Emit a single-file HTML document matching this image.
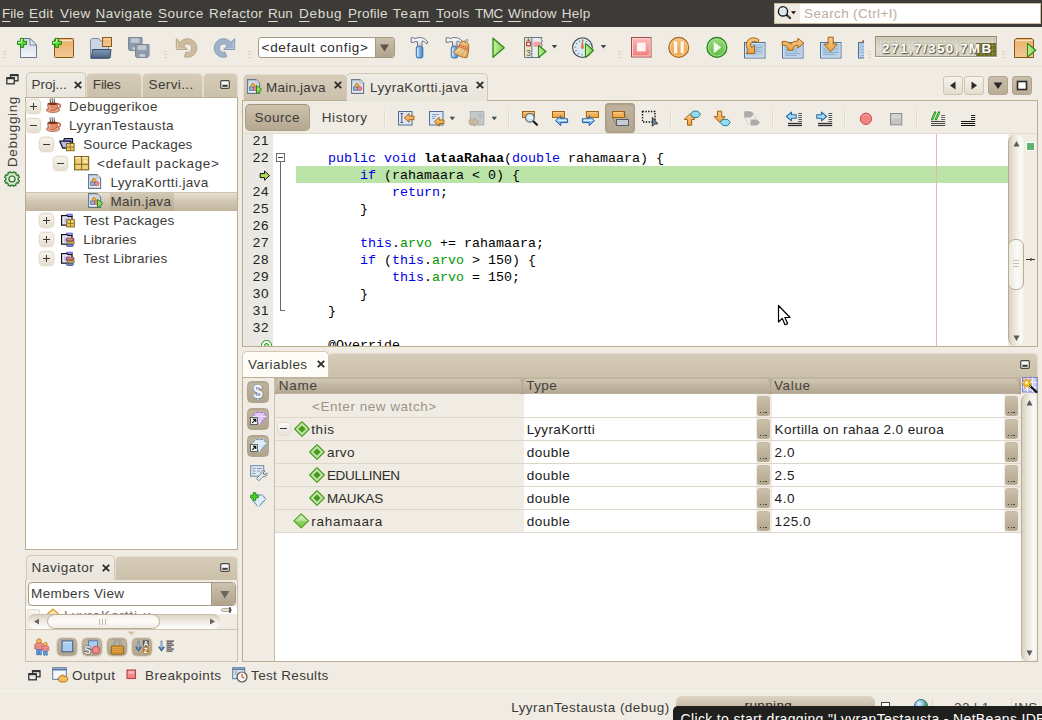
<!DOCTYPE html>
<html><head><meta charset="utf-8"><title>NetBeans</title><style>
html,body{margin:0;padding:0}
body{width:1042px;height:720px;overflow:hidden;background:#f0ece4;position:relative;font-family:"Liberation Sans",sans-serif}
.a{position:absolute;box-sizing:border-box}
.t{position:absolute;white-space:pre;line-height:20px;font-family:"Liberation Sans",sans-serif}
.m{position:absolute;white-space:pre;line-height:20px;font-family:"Liberation Mono",monospace}
u{text-decoration:underline;text-underline-offset:2.5px;text-decoration-thickness:1px}
svg{position:absolute;overflow:visible}
</style></head><body>
<div class="a" style="left:0px;top:0px;width:1042px;height:27px;background:#3c3b37;"></div>
<span class="t" style="left:2.1px;top:4px;font-size:13.5px;color:#dfdbd2;letter-spacing:0.012px;"><u>F</u>ile</span>
<span class="t" style="left:29.1px;top:4px;font-size:13.5px;color:#dfdbd2;letter-spacing:0.309px;"><u>E</u>dit</span>
<span class="t" style="left:60.1px;top:4px;font-size:13.5px;color:#dfdbd2;letter-spacing:0.371px;"><u>V</u>iew</span>
<span class="t" style="left:95.6px;top:4px;font-size:13.5px;color:#dfdbd2;letter-spacing:0.465px;"><u>N</u>avigate</span>
<span class="t" style="left:158.1px;top:4px;font-size:13.5px;color:#dfdbd2;letter-spacing:0.455px;"><u>S</u>ource</span>
<span class="t" style="left:209.1px;top:4px;font-size:13.5px;color:#dfdbd2;letter-spacing:0.385px;">Refa<u>c</u>tor</span>
<span class="t" style="left:268.1px;top:4px;font-size:13.5px;color:#dfdbd2;letter-spacing:-0.088px;"><u>R</u>un</span>
<span class="t" style="left:299.1px;top:4px;font-size:13.5px;color:#dfdbd2;letter-spacing:0.684px;"><u>D</u>ebug</span>
<span class="t" style="left:348.1px;top:4px;font-size:13.5px;color:#dfdbd2;letter-spacing:0.177px;"><u>P</u>rofile</span>
<span class="t" style="left:392.7px;top:4px;font-size:13.5px;color:#dfdbd2;letter-spacing:1.123px;">Tea<u>m</u></span>
<span class="t" style="left:436.1px;top:4px;font-size:13.5px;color:#dfdbd2;letter-spacing:0.397px;"><u>T</u>ools</span>
<span class="t" style="left:475.1px;top:4px;font-size:13.5px;color:#dfdbd2;letter-spacing:-0.580px;">TM<u>C</u></span>
<span class="t" style="left:508.1px;top:4px;font-size:13.5px;color:#dfdbd2;letter-spacing:0.081px;"><u>W</u>indow</span>
<span class="t" style="left:561.7px;top:4px;font-size:13.5px;color:#dfdbd2;letter-spacing:0.284px;"><u>H</u>elp</span>
<div class="a" style="left:774px;top:3px;width:267px;height:21px;background:#fff;border:1px solid #cbbd9f;"></div>
<div class="a" style="left:775px;top:4px;width:25px;height:19px;background:#efebe3;"></div>
<span class="t" style="left:804.1px;top:4px;font-size:13.5px;color:#bcae9c;letter-spacing:0.357px;">Search (Ctrl+I)</span>
<div class="a" style="left:0px;top:66px;width:1042px;height:1px;background:#e4ddd0;"></div>
<div class="a" style="left:0px;top:67px;width:1042px;height:1px;background:#f6f3ed;"></div>
<span class="t" style="left:-0.9px;top:-14px;font-size:13.5px;color:#3c3b37;left:0;top:0;transform-origin:0 0;transform:translate(2.5px,167px) rotate(-90deg);letter-spacing:0.62px;">Debugging</span>
<div class="a" style="left:86px;top:73px;width:56px;height:24px;background:linear-gradient(#d6ccb8,#cbc0aa);border:1px solid #e4ddce;border-bottom:none;border-radius:5px 5px 0 0;"></div>
<div class="a" style="left:142px;top:73px;width:61px;height:24px;background:linear-gradient(#d6ccb8,#cbc0aa);border:1px solid #e4ddce;border-bottom:none;border-radius:5px 5px 0 0;"></div>
<div class="a" style="left:203px;top:73px;width:35px;height:24px;background:linear-gradient(#d6ccb8,#cbc0aa);border:1px solid #e4ddce;border-bottom:none;border-radius:5px 5px 0 0;"></div>
<div class="a" style="left:26px;top:72px;width:60px;height:26px;background:linear-gradient(#efece5,#e9e5dc);border:1px solid #d2c8b5;border-bottom:none;border-radius:5px 5px 0 0;"></div>
<span class="t" style="left:31.6px;top:75px;font-size:13.5px;color:#3c3b37;letter-spacing:-0.037px;">Proj...</span>
<span class="t" style="left:92.8px;top:75px;font-size:13.5px;color:#3c3b37;letter-spacing:-0.140px;">Files</span>
<span class="t" style="left:148.6px;top:75px;font-size:13.5px;color:#3c3b37;letter-spacing:0.374px;">Servi...</span>
<div class="a" style="left:25px;top:97px;width:213px;height:453px;background:#fff;border:1px solid #bbae93;"></div>
<div class="a" style="left:26px;top:192px;width:211px;height:19px;background:linear-gradient(#e6dfd1,#d2c8b4 45%,#c1b59e);border-top:1px solid #cdc3af;"></div>
<div class="a" style="left:110px;top:193px;width:64px;height:18px;background:linear-gradient(#d3c9b5,#c4b8a2 50%,#b9ac94);"></div>
<span class="t" style="left:69.1px;top:97px;font-size:13.5px;color:#3c3b37;letter-spacing:0.387px;">Debuggerikoe</span>
<span class="t" style="left:69.1px;top:116px;font-size:13.5px;color:#3c3b37;letter-spacing:0.480px;">LyyranTestausta</span>
<span class="t" style="left:83.3px;top:135px;font-size:13.5px;color:#3c3b37;letter-spacing:0.233px;">Source Packages</span>
<span class="t" style="left:97.1px;top:154px;font-size:13.5px;color:#3c3b37;letter-spacing:0.671px;">&lt;default package&gt;</span>
<span class="t" style="left:110.4px;top:173px;font-size:13.5px;color:#3c3b37;letter-spacing:0.354px;">LyyraKortti.java</span>
<span class="t" style="left:110.4px;top:192px;font-size:13.5px;color:#3c3b37;letter-spacing:0.347px;">Main.java</span>
<span class="t" style="left:83.3px;top:211px;font-size:13.5px;color:#3c3b37;letter-spacing:0.270px;">Test Packages</span>
<span class="t" style="left:83.3px;top:230px;font-size:13.5px;color:#3c3b37;letter-spacing:0.170px;">Libraries</span>
<span class="t" style="left:83.3px;top:249px;font-size:13.5px;color:#3c3b37;letter-spacing:0.287px;">Test Libraries</span>
<div class="a" style="left:115px;top:556px;width:123px;height:24px;background:linear-gradient(#d6ccb8,#cbc0aa);border:1px solid #e4ddce;border-bottom:none;border-radius:5px 5px 0 0;"></div>
<div class="a" style="left:26px;top:555px;width:89px;height:26px;background:linear-gradient(#efece5,#e9e5dc);border:1px solid #d2c8b5;border-bottom:none;border-radius:5px 5px 0 0;"></div>
<span class="t" style="left:31.6px;top:558px;font-size:13.5px;color:#3c3b37;letter-spacing:0.547px;">Navigator</span>
<div class="a" style="left:25px;top:580px;width:213px;height:82px;background:#f0ece4;border:1px solid #cbc1ad;border-top:none;"></div>
<div class="a" style="left:27.5px;top:581.5px;width:208.5px;height:24.5px;background:#fff;border:1px solid #a89b85;border-radius:4px;"></div>
<div class="a" style="left:210.5px;top:582.5px;width:24.5px;height:22.5px;background:linear-gradient(#cdc2ad,#b1a48d);border-left:1px solid #a89b85;border-radius:0 3px 3px 0;"></div>
<span class="t" style="left:31.1px;top:584px;font-size:13.5px;color:#3c3b37;letter-spacing:0.356px;">Members View</span>
<div class="a" style="left:243px;top:74px;width:104px;height:26px;background:linear-gradient(#d6ccb8,#cbc0aa);border:1px solid #e4ddce;border-bottom:none;border-radius:5px 5px 0 0;"></div>
<div class="a" style="left:346px;top:73px;width:142px;height:28px;background:linear-gradient(#efece5,#e9e5dc);border:1px solid #d2c8b5;border-bottom:none;border-radius:5px 5px 0 0;"></div>
<span class="t" style="left:266.1px;top:78px;font-size:13.5px;color:#3c3b37;letter-spacing:0.192px;">Main.java</span>
<span class="t" style="left:370.1px;top:78px;font-size:13.5px;color:#3c3b37;letter-spacing:0.342px;">LyyraKortti.java</span>
<div class="a" style="left:242px;top:100px;width:796px;height:247px;background:#f0ece4;border:1px solid #bbae93;"></div>
<div class="a" style="left:347px;top:100px;width:140px;height:1px;background:#e9e5dc;"></div>
<div class="a" style="left:245px;top:104px;width:65px;height:27px;background:linear-gradient(#cdc1ac,#b5a891);border:1px solid #ab9f88;border-top-color:#9f937b;border-radius:5px;"></div>
<span class="t" style="left:254.6px;top:108px;font-size:13.5px;color:#3c3b37;letter-spacing:0.438px;">Source</span>
<span class="t" style="left:321.8px;top:108px;font-size:13.5px;color:#3c3b37;letter-spacing:0.543px;">History</span>
<div class="a" style="left:244px;top:134px;width:764px;height:212px;background:#fff;"></div>
<div class="a" style="left:244px;top:133px;width:793px;height:1px;background:#e3dccf;"></div>
<div class="a" style="left:243px;top:134px;width:30px;height:212px;background:#e9e8e3;"></div>
<div class="a" style="left:296px;top:166px;width:712px;height:17px;background:#bbe4a9;"></div>
<div class="a" style="left:936px;top:134px;width:1px;height:212px;background:#f5b0b0;"></div>
<span class="t" style="left:252.7px;top:131px;font-size:13.5px;color:#222;letter-spacing:0.743px;">21</span>
<span class="t" style="left:252.7px;top:148px;font-size:13.5px;color:#222;letter-spacing:0.743px;">22</span>
<span class="t" style="left:252.7px;top:182px;font-size:13.5px;color:#222;letter-spacing:0.743px;">24</span>
<span class="t" style="left:252.7px;top:199px;font-size:13.5px;color:#222;letter-spacing:0.743px;">25</span>
<span class="t" style="left:252.7px;top:216px;font-size:13.5px;color:#222;letter-spacing:0.743px;">26</span>
<span class="t" style="left:252.7px;top:233px;font-size:13.5px;color:#222;letter-spacing:0.743px;">27</span>
<span class="t" style="left:252.7px;top:250px;font-size:13.5px;color:#222;letter-spacing:0.743px;">28</span>
<span class="t" style="left:252.7px;top:267px;font-size:13.5px;color:#222;letter-spacing:0.743px;">29</span>
<span class="t" style="left:252.7px;top:284px;font-size:13.5px;color:#222;letter-spacing:0.743px;">30</span>
<span class="t" style="left:252.7px;top:301px;font-size:13.5px;color:#222;letter-spacing:0.743px;">31</span>
<span class="t" style="left:252.7px;top:318px;font-size:13.5px;color:#222;letter-spacing:0.743px;">32</span>
<span class="m" style="left:328.0px;top:149px;font-size:13.333px;color:#0000e6;">public</span>
<span class="m" style="left:384.0px;top:149px;font-size:13.333px;color:#0000e6;">void</span>
<span class="m" style="left:424.0px;top:149px;font-size:13.333px;color:#000;font-weight:bold;">lataaRahaa</span>
<span class="m" style="left:504.0px;top:149px;font-size:13.333px;color:#000;">(</span>
<span class="m" style="left:512.0px;top:149px;font-size:13.333px;color:#0000e6;">double</span>
<span class="m" style="left:560.0px;top:149px;font-size:13.333px;color:#000;"> rahamaara) {</span>
<span class="m" style="left:360.0px;top:166px;font-size:13.333px;color:#0000e6;">if</span>
<span class="m" style="left:376.0px;top:166px;font-size:13.333px;color:#000;"> (rahamaara &lt; 0) {</span>
<span class="m" style="left:392.0px;top:183px;font-size:13.333px;color:#0000e6;">return</span>
<span class="m" style="left:440.0px;top:183px;font-size:13.333px;color:#000;">;</span>
<span class="m" style="left:296.0px;top:200px;font-size:13.333px;color:#000;">        }</span>
<span class="m" style="left:360.0px;top:234px;font-size:13.333px;color:#0000e6;">this</span>
<span class="m" style="left:392.0px;top:234px;font-size:13.333px;color:#000;">.</span>
<span class="m" style="left:400.0px;top:234px;font-size:13.333px;color:#009900;">arvo</span>
<span class="m" style="left:432.0px;top:234px;font-size:13.333px;color:#000;"> += rahamaara;</span>
<span class="m" style="left:360.0px;top:251px;font-size:13.333px;color:#0000e6;">if</span>
<span class="m" style="left:376.0px;top:251px;font-size:13.333px;color:#000;"> (</span>
<span class="m" style="left:392.0px;top:251px;font-size:13.333px;color:#0000e6;">this</span>
<span class="m" style="left:424.0px;top:251px;font-size:13.333px;color:#000;">.</span>
<span class="m" style="left:432.0px;top:251px;font-size:13.333px;color:#009900;">arvo</span>
<span class="m" style="left:464.0px;top:251px;font-size:13.333px;color:#000;"> &gt; 150) {</span>
<span class="m" style="left:392.0px;top:268px;font-size:13.333px;color:#0000e6;">this</span>
<span class="m" style="left:424.0px;top:268px;font-size:13.333px;color:#000;">.</span>
<span class="m" style="left:432.0px;top:268px;font-size:13.333px;color:#009900;">arvo</span>
<span class="m" style="left:464.0px;top:268px;font-size:13.333px;color:#000;"> = 150;</span>
<span class="m" style="left:296.0px;top:285px;font-size:13.333px;color:#000;">        }</span>
<span class="m" style="left:296.0px;top:302px;font-size:13.333px;color:#000;">    }</span>
<div class="a" style="left:296px;top:336px;width:200px;height:10px;overflow:hidden"><span class="m" style="left:32px;top:0px;font-size:13.333px;color:#000">@Override</span></div>
<div class="a" style="left:328px;top:353px;width:710px;height:24px;background:linear-gradient(#d6ccb8,#cbc0aa);border:1px solid #e4ddce;border-bottom:none;border-radius:5px 5px 0 0;"></div>
<div class="a" style="left:242px;top:351px;width:87px;height:27px;background:#fdfcf6;border:1px solid #d2c8b5;border-bottom:none;border-radius:5px 5px 0 0;"></div>
<span class="t" style="left:248.1px;top:355px;font-size:13.5px;color:#3c3b37;letter-spacing:0.469px;">Variables</span>
<div class="a" style="left:242px;top:377px;width:796px;height:285px;background:#f0ece4;border:1px solid #bbae93;"></div>
<div class="a" style="left:274px;top:378px;width:1px;height:283px;background:#c9bfab;"></div>
<div class="a" style="left:275px;top:378px;width:746px;height:283px;background:#fff;"></div>
<div class="a" style="left:275px;top:377px;width:746px;height:17px;background:linear-gradient(#c2b7a2,#b3a790 30%,#ada18a);"></div>
<div class="a" style="left:276px;top:379px;width:245px;height:14px;background:linear-gradient(#d1c7b3,#c2b7a2 45%,#b4a892);border-radius:3.500px;box-shadow:0 0 0 1px #c0b5a0;"></div>
<div class="a" style="left:524px;top:379px;width:245px;height:14px;background:linear-gradient(#d1c7b3,#c2b7a2 45%,#b4a892);border-radius:3.500px;box-shadow:0 0 0 1px #c0b5a0;"></div>
<div class="a" style="left:772px;top:379px;width:246px;height:14px;background:linear-gradient(#d1c7b3,#c2b7a2 45%,#b4a892);border-radius:3.500px;box-shadow:0 0 0 1px #c0b5a0;"></div>
<span class="t" style="left:278.8px;top:376px;font-size:13.5px;color:#46423b;letter-spacing:0.773px;">Name</span>
<span class="t" style="left:526.3px;top:376px;font-size:13.5px;color:#46423b;letter-spacing:0.359px;">Type</span>
<span class="t" style="left:773.9px;top:376px;font-size:13.5px;color:#46423b;letter-spacing:0.675px;">Value</span>
<div class="a" style="left:275px;top:394px;width:249px;height:139px;background:#f0ece4;"></div>
<div class="a" style="left:756px;top:394px;width:16px;height:139px;background:#f0ece4;"></div>
<div class="a" style="left:1004px;top:394px;width:17px;height:139px;background:#f0ece4;"></div>
<div class="a" style="left:275px;top:417px;width:746px;height:1px;background:#ddd6c9;"></div>
<div class="a" style="left:757px;top:396px;width:13px;height:20px;background:linear-gradient(#cdc2ad,#b2a58e);border-radius:3.5px;box-shadow:inset 0 0 0 .5px #bfb39d;"></div>
<div class="a" style="left:760.2px;top:411.8px;width:1.3px;height:1.3px;background:#4a453c;"></div>
<div class="a" style="left:762.8000000000001px;top:411.8px;width:1.3px;height:1.3px;background:#4a453c;"></div>
<div class="a" style="left:765.4000000000001px;top:411.8px;width:1.3px;height:1.3px;background:#4a453c;"></div>
<div class="a" style="left:1005px;top:396px;width:13px;height:20px;background:linear-gradient(#cdc2ad,#b2a58e);border-radius:3.5px;box-shadow:inset 0 0 0 .5px #bfb39d;"></div>
<div class="a" style="left:1008.2px;top:411.8px;width:1.3px;height:1.3px;background:#4a453c;"></div>
<div class="a" style="left:1010.8000000000001px;top:411.8px;width:1.3px;height:1.3px;background:#4a453c;"></div>
<div class="a" style="left:1013.4000000000001px;top:411.8px;width:1.3px;height:1.3px;background:#4a453c;"></div>
<div class="a" style="left:275px;top:440px;width:746px;height:1px;background:#ddd6c9;"></div>
<div class="a" style="left:757px;top:419px;width:13px;height:20px;background:linear-gradient(#cdc2ad,#b2a58e);border-radius:3.5px;box-shadow:inset 0 0 0 .5px #bfb39d;"></div>
<div class="a" style="left:760.2px;top:434.8px;width:1.3px;height:1.3px;background:#4a453c;"></div>
<div class="a" style="left:762.8000000000001px;top:434.8px;width:1.3px;height:1.3px;background:#4a453c;"></div>
<div class="a" style="left:765.4000000000001px;top:434.8px;width:1.3px;height:1.3px;background:#4a453c;"></div>
<div class="a" style="left:1005px;top:419px;width:13px;height:20px;background:linear-gradient(#cdc2ad,#b2a58e);border-radius:3.5px;box-shadow:inset 0 0 0 .5px #bfb39d;"></div>
<div class="a" style="left:1008.2px;top:434.8px;width:1.3px;height:1.3px;background:#4a453c;"></div>
<div class="a" style="left:1010.8000000000001px;top:434.8px;width:1.3px;height:1.3px;background:#4a453c;"></div>
<div class="a" style="left:1013.4000000000001px;top:434.8px;width:1.3px;height:1.3px;background:#4a453c;"></div>
<div class="a" style="left:275px;top:463px;width:746px;height:1px;background:#ddd6c9;"></div>
<div class="a" style="left:757px;top:442px;width:13px;height:20px;background:linear-gradient(#cdc2ad,#b2a58e);border-radius:3.5px;box-shadow:inset 0 0 0 .5px #bfb39d;"></div>
<div class="a" style="left:760.2px;top:457.8px;width:1.3px;height:1.3px;background:#4a453c;"></div>
<div class="a" style="left:762.8000000000001px;top:457.8px;width:1.3px;height:1.3px;background:#4a453c;"></div>
<div class="a" style="left:765.4000000000001px;top:457.8px;width:1.3px;height:1.3px;background:#4a453c;"></div>
<div class="a" style="left:1005px;top:442px;width:13px;height:20px;background:linear-gradient(#cdc2ad,#b2a58e);border-radius:3.5px;box-shadow:inset 0 0 0 .5px #bfb39d;"></div>
<div class="a" style="left:1008.2px;top:457.8px;width:1.3px;height:1.3px;background:#4a453c;"></div>
<div class="a" style="left:1010.8000000000001px;top:457.8px;width:1.3px;height:1.3px;background:#4a453c;"></div>
<div class="a" style="left:1013.4000000000001px;top:457.8px;width:1.3px;height:1.3px;background:#4a453c;"></div>
<div class="a" style="left:275px;top:486px;width:746px;height:1px;background:#ddd6c9;"></div>
<div class="a" style="left:757px;top:465px;width:13px;height:20px;background:linear-gradient(#cdc2ad,#b2a58e);border-radius:3.5px;box-shadow:inset 0 0 0 .5px #bfb39d;"></div>
<div class="a" style="left:760.2px;top:480.8px;width:1.3px;height:1.3px;background:#4a453c;"></div>
<div class="a" style="left:762.8000000000001px;top:480.8px;width:1.3px;height:1.3px;background:#4a453c;"></div>
<div class="a" style="left:765.4000000000001px;top:480.8px;width:1.3px;height:1.3px;background:#4a453c;"></div>
<div class="a" style="left:1005px;top:465px;width:13px;height:20px;background:linear-gradient(#cdc2ad,#b2a58e);border-radius:3.5px;box-shadow:inset 0 0 0 .5px #bfb39d;"></div>
<div class="a" style="left:1008.2px;top:480.8px;width:1.3px;height:1.3px;background:#4a453c;"></div>
<div class="a" style="left:1010.8000000000001px;top:480.8px;width:1.3px;height:1.3px;background:#4a453c;"></div>
<div class="a" style="left:1013.4000000000001px;top:480.8px;width:1.3px;height:1.3px;background:#4a453c;"></div>
<div class="a" style="left:275px;top:509px;width:746px;height:1px;background:#ddd6c9;"></div>
<div class="a" style="left:757px;top:488px;width:13px;height:20px;background:linear-gradient(#cdc2ad,#b2a58e);border-radius:3.5px;box-shadow:inset 0 0 0 .5px #bfb39d;"></div>
<div class="a" style="left:760.2px;top:503.8px;width:1.3px;height:1.3px;background:#4a453c;"></div>
<div class="a" style="left:762.8000000000001px;top:503.8px;width:1.3px;height:1.3px;background:#4a453c;"></div>
<div class="a" style="left:765.4000000000001px;top:503.8px;width:1.3px;height:1.3px;background:#4a453c;"></div>
<div class="a" style="left:1005px;top:488px;width:13px;height:20px;background:linear-gradient(#cdc2ad,#b2a58e);border-radius:3.5px;box-shadow:inset 0 0 0 .5px #bfb39d;"></div>
<div class="a" style="left:1008.2px;top:503.8px;width:1.3px;height:1.3px;background:#4a453c;"></div>
<div class="a" style="left:1010.8000000000001px;top:503.8px;width:1.3px;height:1.3px;background:#4a453c;"></div>
<div class="a" style="left:1013.4000000000001px;top:503.8px;width:1.3px;height:1.3px;background:#4a453c;"></div>
<div class="a" style="left:275px;top:532px;width:746px;height:1px;background:#ddd6c9;"></div>
<div class="a" style="left:757px;top:511px;width:13px;height:20px;background:linear-gradient(#cdc2ad,#b2a58e);border-radius:3.5px;box-shadow:inset 0 0 0 .5px #bfb39d;"></div>
<div class="a" style="left:760.2px;top:526.8px;width:1.3px;height:1.3px;background:#4a453c;"></div>
<div class="a" style="left:762.8000000000001px;top:526.8px;width:1.3px;height:1.3px;background:#4a453c;"></div>
<div class="a" style="left:765.4000000000001px;top:526.8px;width:1.3px;height:1.3px;background:#4a453c;"></div>
<div class="a" style="left:1005px;top:511px;width:13px;height:20px;background:linear-gradient(#cdc2ad,#b2a58e);border-radius:3.5px;box-shadow:inset 0 0 0 .5px #bfb39d;"></div>
<div class="a" style="left:1008.2px;top:526.8px;width:1.3px;height:1.3px;background:#4a453c;"></div>
<div class="a" style="left:1010.8000000000001px;top:526.8px;width:1.3px;height:1.3px;background:#4a453c;"></div>
<div class="a" style="left:1013.4000000000001px;top:526.8px;width:1.3px;height:1.3px;background:#4a453c;"></div>
<span class="t" style="left:312.1px;top:397px;font-size:13.5px;color:#9a948a;letter-spacing:0.526px;">&lt;Enter new watch&gt;</span>
<span class="t" style="left:311.2px;top:420px;font-size:13.5px;color:#2e2c29;letter-spacing:0.598px;">this</span>
<span class="t" style="left:526.8px;top:420px;font-size:13.5px;color:#1c1b1a;letter-spacing:0.389px;">LyyraKortti</span>
<span class="t" style="left:774.6px;top:420px;font-size:13.5px;color:#1c1b1a;letter-spacing:0.385px;">Kortilla on rahaa 2.0 euroa</span>
<span class="t" style="left:326.9px;top:443px;font-size:13.5px;color:#2e2c29;letter-spacing:0.485px;">arvo</span>
<span class="t" style="left:526.8px;top:443px;font-size:13.5px;color:#1c1b1a;letter-spacing:0.461px;">double</span>
<span class="t" style="left:774.6px;top:443px;font-size:13.5px;color:#1c1b1a;letter-spacing:0.578px;">2.0</span>
<span class="t" style="left:326.9px;top:466px;font-size:13.5px;color:#2e2c29;letter-spacing:-0.319px;">EDULLINEN</span>
<span class="t" style="left:526.8px;top:466px;font-size:13.5px;color:#1c1b1a;letter-spacing:0.461px;">double</span>
<span class="t" style="left:774.6px;top:466px;font-size:13.5px;color:#1c1b1a;letter-spacing:0.578px;">2.5</span>
<span class="t" style="left:326.9px;top:489px;font-size:13.5px;color:#2e2c29;letter-spacing:-0.136px;">MAUKAS</span>
<span class="t" style="left:526.8px;top:489px;font-size:13.5px;color:#1c1b1a;letter-spacing:0.461px;">double</span>
<span class="t" style="left:774.6px;top:489px;font-size:13.5px;color:#1c1b1a;letter-spacing:0.578px;">4.0</span>
<span class="t" style="left:311.2px;top:512px;font-size:13.5px;color:#2e2c29;letter-spacing:0.736px;">rahamaara</span>
<span class="t" style="left:526.8px;top:512px;font-size:13.5px;color:#1c1b1a;letter-spacing:0.461px;">double</span>
<span class="t" style="left:774.6px;top:512px;font-size:13.5px;color:#1c1b1a;letter-spacing:0.544px;">125.0</span>
<span class="t" style="left:71.9px;top:666px;font-size:13.5px;color:#3c3b37;letter-spacing:0.529px;">Output</span>
<span class="t" style="left:145.1px;top:666px;font-size:13.5px;color:#3c3b37;letter-spacing:0.474px;">Breakpoints</span>
<span class="t" style="left:251.1px;top:666px;font-size:13.5px;color:#3c3b37;letter-spacing:0.331px;">Test Results</span>
<div class="a" style="left:0px;top:689px;width:1042px;height:1px;background:#ebe6dc;"></div>
<div class="a" style="left:0px;top:690px;width:1042px;height:1px;background:#f5f2ec;"></div>
<span class="t" style="left:511.2px;top:698px;font-size:13.5px;color:#3c3b37;letter-spacing:0.449px;">LyyranTestausta (debug)</span>
<div class="a" style="left:675.5px;top:696px;width:199px;height:24px;background:linear-gradient(#ddd5c4,#c6bba6 45%,#b5a992);border-radius:6px 6px 0 0;"></div>
<span class="t" style="left:744.5px;top:696px;font-size:13.5px;color:#2b2a27;letter-spacing:0.382px;">running...</span>
<div class="a" style="left:881px;top:702px;width:9px;height:6px;border:1px solid #444;border-bottom:none;background:#fff;"></div>
<div class="a" style="left:913px;top:698px;width:15px;height:8px;overflow:hidden"><div class="a" style="left:.500px;top:.500px;width:14px;height:14px;border-radius:50%;background:radial-gradient(circle at 35% 30%,#e8f4fc,#8ec8f0 30%,#4aa040 60%,#2a6a2a);border:1px solid #3a6a8a"></div></div>
<span class="t" style="left:954.1px;top:698px;font-size:13.5px;color:#4a4843;letter-spacing:0.328px;">23 | 1</span>
<span class="t" style="left:1014.1px;top:698px;font-size:13.5px;color:#4a4843;letter-spacing:0.332px;">INS</span>
<div class="a" style="left:932px;top:698px;width:1px;height:10px;background:#e0d9cb;"></div>
<div class="a" style="left:1011px;top:698px;width:1px;height:10px;background:#e0d9cb;"></div>
<div class="a" style="left:673px;top:706px;width:380px;height:20px;background:#1f1f1d;border-radius:5px 0 0 0;"></div>
<span class="t" style="left:680.6px;top:709px;font-size:14px;color:#fff;letter-spacing:.334px;">Click to start dragging "LyyranTestausta - NetBeans IDE 7</span>
<svg width="0" height="0" style="left:0;top:0"><defs>
<linearGradient id="gPage" x1="0" y1="0" x2="0" y2="1"><stop offset="0" stop-color="#ccd7e6"/><stop offset="1" stop-color="#f4f6f9"/></linearGradient>
<linearGradient id="gOr" x1="0" y1="0" x2="0" y2="1"><stop offset="0" stop-color="#e9b06a"/><stop offset="1" stop-color="#f3c995"/></linearGradient>
<linearGradient id="gFold" x1="0" y1="0" x2="0" y2="1"><stop offset="0" stop-color="#7f97b2"/><stop offset="1" stop-color="#4d6784"/></linearGradient>
<linearGradient id="gGreen" x1="0" y1="0" x2="1" y2="0"><stop offset="0" stop-color="#c8eda4"/><stop offset="1" stop-color="#7fce4e"/></linearGradient>
<linearGradient id="gStop" x1="0" y1="0" x2="0" y2="1"><stop offset="0" stop-color="#f9bdb9"/><stop offset="1" stop-color="#f27a76"/></linearGradient>
<linearGradient id="gPause" x1="0" y1="0" x2="0" y2="1"><stop offset="0" stop-color="#f3c07c"/><stop offset="1" stop-color="#eba24a"/></linearGradient>
<linearGradient id="gCont" x1="0" y1="0" x2="0" y2="1"><stop offset="0" stop-color="#9bd97d"/><stop offset="1" stop-color="#5fbd45"/></linearGradient>
<linearGradient id="gHandle" x1="0" y1="0" x2="0" y2="1"><stop offset="0" stop-color="#8fc0ea"/><stop offset="1" stop-color="#3f86cf"/></linearGradient>
<linearGradient id="gBlue" x1="0" y1="0" x2="0" y2="1"><stop offset="0" stop-color="#a9c6e2"/><stop offset="1" stop-color="#bcd3e8"/></linearGradient>
<linearGradient id="gArr" x1="0" y1="0" x2="0" y2="1"><stop offset="0" stop-color="#f7cc8a"/><stop offset="1" stop-color="#eea03c"/></linearGradient>
<linearGradient id="gMem" x1="0" y1="0" x2="0" y2="1"><stop offset="0" stop-color="#c9c6b3"/><stop offset="0.5" stop-color="#dedbcf"/><stop offset="1" stop-color="#d4d1c2"/></linearGradient>
<linearGradient id="gBtn" x1="0" y1="0" x2="0" y2="1"><stop offset="0" stop-color="#f6f3ec"/><stop offset="1" stop-color="#ddd5c5"/></linearGradient>
</defs></svg>
<div class="a" style="left:3px;top:51px;width:3px;height:1px;background:#ddd3bd;"></div>
<div class="a" style="left:3px;top:54px;width:3px;height:1px;background:#ddd3bd;"></div>
<div class="a" style="left:3px;top:57px;width:3px;height:1px;background:#ddd3bd;"></div>
<div class="a" style="left:164px;top:51px;width:3px;height:1px;background:#ddd3bd;"></div>
<div class="a" style="left:164px;top:54px;width:3px;height:1px;background:#ddd3bd;"></div>
<div class="a" style="left:164px;top:57px;width:3px;height:1px;background:#ddd3bd;"></div>
<div class="a" style="left:248px;top:51px;width:3px;height:1px;background:#ddd3bd;"></div>
<div class="a" style="left:248px;top:54px;width:3px;height:1px;background:#ddd3bd;"></div>
<div class="a" style="left:248px;top:57px;width:3px;height:1px;background:#ddd3bd;"></div>
<div class="a" style="left:618px;top:51px;width:3px;height:1px;background:#ddd3bd;"></div>
<div class="a" style="left:618px;top:54px;width:3px;height:1px;background:#ddd3bd;"></div>
<div class="a" style="left:618px;top:57px;width:3px;height:1px;background:#ddd3bd;"></div>
<div class="a" style="left:868px;top:51px;width:3px;height:1px;background:#ddd3bd;"></div>
<div class="a" style="left:868px;top:54px;width:3px;height:1px;background:#ddd3bd;"></div>
<div class="a" style="left:868px;top:57px;width:3px;height:1px;background:#ddd3bd;"></div>
<div class="a" style="left:1002px;top:51px;width:3px;height:1px;background:#ddd3bd;"></div>
<div class="a" style="left:1002px;top:54px;width:3px;height:1px;background:#ddd3bd;"></div>
<div class="a" style="left:1002px;top:57px;width:3px;height:1px;background:#ddd3bd;"></div>
<svg style="left:16px;top:36px" width="24" height="24" viewBox="0 0 24 24"><path d="M4.5 2.5h9.5l6.5 6.5v12.5h-16z" fill="url(#gPage)" stroke="#68778b" stroke-width="1"/><path d="M14 2.5v6.5h6.5z" fill="#dfe6ef" stroke="#68778b" stroke-width="0.8"/><path d="M1.5 5.3h2.900v-2.900h3.200v2.900h2.900v3.200h-2.900v2.900h-3.200v-2.900h-2.900z" fill="#5bd636" stroke="#1d8a0d" stroke-width="1"/><path d="M5.4 6.3v-2.900h1.200M5.4 6.3h-2.900v1.200" fill="none" stroke="#d6f8c0" stroke-width="1"/></svg>
<svg style="left:52px;top:36px" width="24" height="24" viewBox="0 0 24 24"><rect x="2.5" y="2.5" width="19" height="19" rx="1" fill="url(#gOr)" stroke="#8a5718" stroke-width="1"/><path d="M3.5 4.5h17" stroke="#fae2bd" stroke-width="1.4"/><path d="M0.5 5.3h2.900v-2.900h3.200v2.900h2.900v3.200h-2.900v2.900h-3.200v-2.900h-2.900z" fill="#5bd636" stroke="#1d8a0d" stroke-width="1"/><path d="M4.4 6.3v-2.900h1.200M4.4 6.3h-2.900v1.200" fill="none" stroke="#d6f8c0" stroke-width="1"/></svg>
<svg style="left:88px;top:35px" width="26" height="25" viewBox="0 0 26 25"><path d="M2.5 23.5v-18.5l1.5-1.5h7l1.5 2.5h8v17.5z" fill="#ccd6e2" stroke="#7c8da3" stroke-width="1"/><rect x="14.5" y="2.5" width="9" height="9" fill="url(#gOr)" stroke="#8a5718"/><path d="M15.5 4h7" stroke="#fae2bd" stroke-width="1.2"/><path d="M4.5 14.5h18.5l-1 8.5h-18.5z" fill="url(#gFold)" stroke="#354a63" stroke-width="1"/></svg>
<svg style="left:127px;top:36px" width="25" height="24" viewBox="0 0 25 24"><path d="M1.5 1.5h13.5v11.5l-1.5 1.5h-11l-1-1z" fill="#8e9bab" stroke="#7a8899" stroke-width="1"/><rect x="3.8" y="2.3" width="8.5" height="4.6" fill="#c3cad3"/><rect x="5.5" y="11.2" width="5.5" height="2.6" fill="#c9cfd7"/><path d="M8.5 8.5h13.5v11.5l-1.5 1.5h-11l-1-1z" fill="#8e9bab" stroke="#7a8899" stroke-width="1"/><rect x="10.8" y="9.3" width="8.5" height="4.6" fill="#c3cad3"/><rect x="12.5" y="18.2" width="5.5" height="2.6" fill="#c9cfd7"/></svg>
<svg style="left:175px;top:37px" width="24" height="22" viewBox="0 0 24 22"><path d="M1.3 1.5 L1.3 12.5 L12.3 12.5 L8.81 9.0 A4.2 4.2 0 1 1 11.06 14.95 L9.32 19.74 A9.3 9.3 0 1 0 5.13 5.33 Z" fill="#cdbb9f" stroke="#bda98a" stroke-width="1" stroke-linejoin="round"/><path d="M2.500 4.500v7h7" fill="none" stroke="#dccfb8" stroke-width=".8"/></svg>
<svg style="left:211.5px;top:37px" width="24" height="22" viewBox="0 0 24 22"><path d="M22.7 1.5 L22.7 12.5 L11.7 12.5 L15.19 9.0 A4.2 4.2 0 1 0 12.94 14.95 L14.68 19.74 A9.3 9.3 0 1 1 18.87 5.33 Z" fill="#9db3c9" stroke="#879fb8" stroke-width="1" stroke-linejoin="round"/><path d="M21.500 4.500v7h-7" fill="none" stroke="#bccde0" stroke-width=".8"/></svg>
<div class="a" style="left:258px;top:37px;width:137px;height:21px;background:#fff;border:1px solid #a79a83;border-radius:3px;"></div>
<div class="a" style="left:375px;top:38px;width:19px;height:19px;background:linear-gradient(#cbc0aa,#b1a48d);border-left:1px solid #a79a83;border-radius:0 2px 2px 0;"></div>
<svg style="left:375px;top:38px" width="19" height="19" viewBox="0 0 19 19"><path d="M5 6.5h9l-4.5 7z" fill="#5b544a"/></svg>
<span class="t" style="left:261.6px;top:38px;font-size:13.5px;color:#2e2d2a;letter-spacing:0.683px;">&lt;default config&gt;</span>
<svg width="0" height="0" style="left:0;top:0"><defs><linearGradient id="gHd" x1="0" y1="0" x2="0" y2="1"><stop offset="0" stop-color="#ffffff"/><stop offset="1" stop-color="#cfd5dd"/></linearGradient><linearGradient id="gHn" x1="0" y1="0" x2="1" y2="0"><stop offset="0" stop-color="#b5d8f4"/><stop offset=".45" stop-color="#7db6ea"/><stop offset="1" stop-color="#3f86d0"/></linearGradient><linearGradient id="gBr" x1="0" y1="0" x2="1" y2="1"><stop offset="0" stop-color="#f0cf98"/><stop offset="1" stop-color="#d9a258"/></linearGradient></defs></svg>
<svg style="left:410px;top:36px" width="20" height="24" viewBox="0 0 20 24"><rect x="6.300" y="10.400" width="6.500" height="11.500" rx="1.600" fill="url(#gHn)" stroke="#2f6aa8" stroke-width="1"/><path d="M7.800 12v8" stroke="#dceefb" stroke-width="1.100"/><path d="M1.200 1.800 L3.800 1.800 L5 2.600 C8 1.200 12 1.200 14.500 2.800 C16.500 4 17.800 5.800 17.800 7.200 L16 7.600 C15 5.800 13.500 5 12 5.200 L12 10.200 L7.500 10.200 L7.500 5.800 L5 5.600 L3.800 6.400 L1.200 6.400 Z" fill="url(#gHd)" stroke="#6b7480" stroke-width="1" stroke-linejoin="round"/></svg>
<svg style="left:445px;top:36px" width="20" height="24" viewBox="0 0 20 24"><rect x="6.300" y="10.400" width="6.500" height="11.500" rx="1.600" fill="url(#gHn)" stroke="#2f6aa8" stroke-width="1"/><path d="M7.800 12v8" stroke="#dceefb" stroke-width="1.100"/><path d="M1.200 1.800 L3.800 1.800 L5 2.600 C8 1.200 12 1.200 14.500 2.800 C16.500 4 17.800 5.800 17.800 7.200 L16 7.600 C15 5.800 13.500 5 12 5.200 L12 10.200 L7.500 10.200 L7.500 5.800 L5 5.600 L3.800 6.400 L1.200 6.400 Z" fill="url(#gHd)" stroke="#6b7480" stroke-width="1" stroke-linejoin="round"/></svg>
<svg style="left:452px;top:38px" width="20" height="22" viewBox="0 0 20 22"><path d="M12 3.600 L15.200 1.200 L16.400 2.400 L14 4.800z" fill="#c9d3df" stroke="#7f8ea0" stroke-width=".8"/><path d="M11.500 3.200 C13.500 3.500 16 5 16.600 6.500 C17 10 16.500 15 15 19.600 C11 20 5 17.500 1.400 14 C4 12 7 8 9 4.200 C9.800 3.400 10.600 3.100 11.500 3.200 Z" fill="url(#gBr)" stroke="#a8721e" stroke-width="1" stroke-linejoin="round"/><path d="M7.300 7.300 C10 7.600 13.500 8.800 16.700 10.600 M6.500 8.900 C9.500 9.200 13 10.500 16.700 12.600" stroke="#d8452a" stroke-width="1.100" stroke-dasharray="1.300 .700" fill="none"/><path d="M4.500 13.500 L9 11 M7.500 16 L11.500 12.500 M11.500 18.500 L14 13.500" stroke="#f7e2bc" stroke-width=".9" fill="none"/></svg>
<svg style="left:491px;top:36px" width="16" height="24" viewBox="0 0 16 24"><path d="M2 2.2 L13.2 11.7 L2 21.3z" fill="url(#gGreen)" stroke="#2c8a0f" stroke-width="1.3" stroke-linejoin="round"/></svg>
<svg style="left:523px;top:36px" width="26" height="24" viewBox="0 0 26 24"><path d="M1.500 1.500h17.500l-1 2 1.500 1.500-1.500 2 1 1.500-1.500 9-1 2.500 .5 1.500h-15.500z" fill="#e9ebee" stroke="#66768a" stroke-width="1"/><rect x="2" y="2" width="6.600" height="19" fill="#efe5b9"/><path d="M8.800 1.500v20" stroke="#66768a" stroke-width="1"/><rect x="10.500" y="5.800" width="7.500" height="5" fill="#f6a1a6"/><rect x="3.700" y="6.200" width="3.600" height="3.600" fill="#fff" stroke="#b82525" stroke-width="1.100"/><path d="M5.500 2.500v2.500M3.800 4.200h3.400" stroke="#555" stroke-width=".8"/><text x="3" y="19.800" font-family="Liberation Sans" font-size="8.500" fill="#556">3</text><path d="M15.500 9.500 L23 15.500 L15.500 21.500z" fill="url(#gGreen)" stroke="#2c8a0f" stroke-width="1.100" stroke-linejoin="round"/></svg>
<svg style="left:551px;top:44px" width="8" height="6" viewBox="0 0 8 6"><path d="M.8 1h5.400l-2.700 3.600z" fill="#3d4856"/></svg>
<svg style="left:571px;top:36px" width="26" height="24" viewBox="0 0 26 24"><circle cx="11.400" cy="11.600" r="9.800" fill="#d9e8f5" stroke="#4f5358" stroke-width="1.300"/><circle cx="11.400" cy="11.600" r="8.500" fill="none" stroke="#f4f8fb" stroke-width=".8"/><circle cx="11.400" cy="11.600" r="7.200" fill="none" stroke="#5a6a7a" stroke-width="1.400" stroke-dasharray=".8 2.970"/><path d="M11.400 3.200 L12.400 11.600 L10.400 11.600z" fill="#e8792b" stroke="#d06a22" stroke-width=".5"/><circle cx="11.400" cy="11.800" r="1.200" fill="#e8792b"/><path d="M14.500 7.500 L22.500 14.500 L14.500 21.500z" fill="url(#gGreen)" stroke="#2c8a0f" stroke-width="1.100" stroke-linejoin="round"/></svg>
<svg style="left:600px;top:44px" width="8" height="6" viewBox="0 0 8 6"><path d="M.8 1h5.400l-2.700 3.600z" fill="#3d4856"/></svg>
<svg style="left:630px;top:36px" width="22" height="22" viewBox="0 0 22 22"><rect x="1.500" y="1.500" width="19.500" height="19.500" fill="url(#gStop)" stroke="#a24c4a" stroke-width="1"/><rect x="2.500" y="2.500" width="17.500" height="17.500" fill="none" stroke="#fbd3d0" stroke-width="1"/><rect x="7" y="6.600" width="8.600" height="8.800" fill="#fdf3f2"/></svg>
<svg style="left:667px;top:36px" width="24" height="24" viewBox="0 0 24 24"><circle cx="11.750" cy="11.400" r="9.900" fill="url(#gPause)" stroke="#b06c22" stroke-width="1.300"/><circle cx="11.750" cy="11.400" r="8.600" fill="none" stroke="#f8d6a4" stroke-width=".8"/><rect x="7" y="5.400" width="3.200" height="11.800" fill="#fdf6ea"/><rect x="13.600" y="5.400" width="3.200" height="11.800" fill="#fdf6ea"/></svg>
<svg style="left:705px;top:36px" width="24" height="24" viewBox="0 0 24 24"><circle cx="11.900" cy="11.400" r="9.900" fill="url(#gCont)" stroke="#23821a" stroke-width="1.300"/><circle cx="11.900" cy="11.400" r="8.600" fill="none" stroke="#b4e69e" stroke-width=".8"/><path d="M8.750 5.700 L16 11.500 L8.750 17.300z" fill="#f1faec"/></svg>
<svg style="left:743px;top:36px" width="24" height="24" viewBox="0 0 24 24"><rect x="1.500" y="6.500" width="20.500" height="15.500" fill="url(#gBlue)" stroke="#4f6f93" stroke-width="1"/><rect x="2.500" y="7.500" width="18.500" height="13.500" fill="none" stroke="#cfe0f0" stroke-width="1"/><path d="M12.500 11.500h6M12.500 13.500h3M12.500 15.500h6M12.500 17.500h2" stroke="#8eadcc" stroke-width="1"/><path d="M15.800 3.700 C13 1.200 6 0.800 3.800 6 C2.600 9 3.600 12 5.100 14.100 L3.200 17.600 L11.600 17.600 L11.600 9.100 L8.800 11.800 C6.600 9.500 7.500 6 10.400 5.400 C12 5.100 13.600 5.800 15.100 6.700 Z" fill="url(#gArr)" stroke="#a5620f" stroke-width="1" stroke-linejoin="round"/></svg>
<svg style="left:781px;top:36px" width="25" height="24" viewBox="0 0 25 24"><rect x="1.500" y="6.500" width="20.500" height="15.500" fill="url(#gBlue)" stroke="#4f6f93" stroke-width="1"/><rect x="2.500" y="7.500" width="18.500" height="13.500" fill="none" stroke="#cfe0f0" stroke-width="1"/><path d="M4.500 13.500h3M13 13.500h3M4.500 15.500h2M13 15.500h3M4.500 17.500h15M4.500 19.500h11" stroke="#8eadcc" stroke-width="1"/><path d="M1.200 5.400 C5 5.200 8 5.800 9.500 8.600 C11 5.800 13.500 5.200 16.800 5.200 L16.800 2.200 L22.800 7.100 L16.800 12.100 L16.800 9.200 C14 9.200 12 10.500 12 14.300 L7 14.300 C7 10.500 5.500 9.100 1.200 9.100 Z" fill="url(#gArr)" stroke="#a5620f" stroke-width="1" stroke-linejoin="round"/></svg>
<svg style="left:819px;top:36px" width="24" height="24" viewBox="0 0 24 24"><rect x="1.500" y="6.500" width="20.500" height="15.500" fill="url(#gBlue)" stroke="#4f6f93" stroke-width="1"/><rect x="2.500" y="7.500" width="18.500" height="13.500" fill="none" stroke="#cfe0f0" stroke-width="1"/><path d="M4.500 12.500h2M16.500 12.500h2M4.500 14.500h4M15 14.500h1M4.500 16.500h15M4.500 18.500h11" stroke="#8eadcc" stroke-width="1"/><path d="M9.100 1.200h5.100v6.900h4l-6.600 7.700-6.600-7.700h4.100z" fill="url(#gArr)" stroke="#a5620f" stroke-width="1" stroke-linejoin="round"/></svg>
<div class="a" style="left:857px;top:36px;width:7px;height:24px;overflow:hidden">
<svg style="left:0px;top:0px" width="24" height="24" viewBox="0 0 24 24"><rect x="1.500" y="6.500" width="20.500" height="15.500" fill="url(#gBlue)" stroke="#4f6f93" stroke-width="1"/><path d="M4.500 10.500h6M4.500 13.500h6M4.500 16.500h6M4.500 19.500h6" stroke="#8eadcc"/><path d="M5 5.500l3-2v2z" fill="#eea03c" stroke="#a5620f" stroke-width=".8"/></svg>
</div>
<div class="a" style="left:875px;top:36px;width:122px;height:21px;background:linear-gradient(#c6c3af,#dcd9cc 55%,#d6d3c5);border:1px solid #9c9980;border-top-color:#8a876e;box-shadow:0 1px 0 #fff;"></div>
<div class="a" style="left:976px;top:43px;width:20px;height:13px;background:#6e6e22;"></div>
<div class="a" style="left:876px;top:37px;width:120px;height:19px;background-image:linear-gradient(90deg,rgba(255,255,255,.13) 1px,transparent 1px),linear-gradient(rgba(255,255,255,.13) 1px,transparent 1px);background-size:4px 4px;"></div>
<span class="t" style="left:882.1px;top:39px;font-size:13.5px;color:#fff;letter-spacing:1.400px;font-weight:bold;text-shadow:1px 1px 1px #55553a,0 0 2px #6a6a50;">271,7/350,7MB</span>
<svg style="left:1013px;top:37px" width="24" height="22" viewBox="0 0 24 22"><path d="M1.500 3 L3 1.500 L19 1.500 L20.500 3 L20.500 20.500 L1.500 20.500z" fill="url(#gOr)" stroke="#8a5718" stroke-width="1"/><path d="M2.500 3.500h17" stroke="#fae2bd" stroke-width="1.200"/><path d="M14.500 6.500 L22.800 13.300 L14.500 20z" fill="url(#gGreen)" stroke="#2c8a0f" stroke-width="1.100" stroke-linejoin="round"/></svg>
<div class="a" style="left:26px;top:99px;width:14.5px;height:14.5px;background:linear-gradient(#f7f4ed,#e6dfd1);border:1px solid #e3dccd;border-radius:4px;box-shadow:0 0 0 0.5px #eee9de;"></div>
<div class="a" style="left:29.7px;top:105.5px;width:7px;height:1.4px;background:#3a3a38;"></div>
<div class="a" style="left:32.5px;top:102.7px;width:1.4px;height:7px;background:#3a3a38;"></div>
<div class="a" style="left:26px;top:118px;width:14.5px;height:14.5px;background:linear-gradient(#f7f4ed,#e6dfd1);border:1px solid #e3dccd;border-radius:4px;box-shadow:0 0 0 0.5px #eee9de;"></div>
<div class="a" style="left:29.7px;top:124.5px;width:7px;height:1.4px;background:#3a3a38;"></div>
<div class="a" style="left:39.3px;top:137px;width:14.5px;height:14.5px;background:linear-gradient(#f7f4ed,#e6dfd1);border:1px solid #e3dccd;border-radius:4px;box-shadow:0 0 0 0.5px #eee9de;"></div>
<div class="a" style="left:43.0px;top:143.5px;width:7px;height:1.4px;background:#3a3a38;"></div>
<div class="a" style="left:53.3px;top:156px;width:14.5px;height:14.5px;background:linear-gradient(#f7f4ed,#e6dfd1);border:1px solid #e3dccd;border-radius:4px;box-shadow:0 0 0 0.5px #eee9de;"></div>
<div class="a" style="left:57.0px;top:162.5px;width:7px;height:1.4px;background:#3a3a38;"></div>
<div class="a" style="left:39.3px;top:213px;width:14.5px;height:14.5px;background:linear-gradient(#f7f4ed,#e6dfd1);border:1px solid #e3dccd;border-radius:4px;box-shadow:0 0 0 0.5px #eee9de;"></div>
<div class="a" style="left:43.0px;top:219.5px;width:7px;height:1.4px;background:#3a3a38;"></div>
<div class="a" style="left:45.8px;top:216.7px;width:1.4px;height:7px;background:#3a3a38;"></div>
<div class="a" style="left:39.3px;top:232px;width:14.5px;height:14.5px;background:linear-gradient(#f7f4ed,#e6dfd1);border:1px solid #e3dccd;border-radius:4px;box-shadow:0 0 0 0.5px #eee9de;"></div>
<div class="a" style="left:43.0px;top:238.5px;width:7px;height:1.4px;background:#3a3a38;"></div>
<div class="a" style="left:45.8px;top:235.7px;width:1.4px;height:7px;background:#3a3a38;"></div>
<div class="a" style="left:39.3px;top:251px;width:14.5px;height:14.5px;background:linear-gradient(#f7f4ed,#e6dfd1);border:1px solid #e3dccd;border-radius:4px;box-shadow:0 0 0 0.5px #eee9de;"></div>
<div class="a" style="left:43.0px;top:257.5px;width:7px;height:1.4px;background:#3a3a38;"></div>
<div class="a" style="left:45.8px;top:254.7px;width:1.4px;height:7px;background:#3a3a38;"></div>
<svg style="left:46px;top:98px" width="16" height="15" viewBox="0 0 16 15"><path d="M4.300 .500c-.7 1.500 .7 3 0 5M6.300 .300c-.7 1.500 .7 3.200 0 5.200M8.300 .500c-.7 1.500 .7 3 0 5" stroke="#3a3a3a" stroke-width=".9" fill="none"/><ellipse cx="7" cy="12" rx="6.600" ry="2.500" fill="#e7a58a" stroke="#b0593a" stroke-width=".8"/><path d="M11.300 6.300c3-1.200 4.600 2.400 .6 4.200" fill="none" stroke="#cc6c4c" stroke-width="1.600"/><path d="M1.800 5.600h9.800c.5 3.600-1 6-3.200 6.800h-3.400c-2.200-.8-3.700-3.200-3.200-6.800z" fill="#e08b6b" stroke="#b0593a" stroke-width=".8"/><ellipse cx="6.700" cy="5.800" rx="4.800" ry="1.200" fill="#7a3520"/><path d="M3.200 7.500c0 2 .6 3.300 1.800 4.300" stroke="#f6c3ae" stroke-width="1.100" fill="none"/></svg>
<svg style="left:46px;top:117px" width="16" height="15" viewBox="0 0 16 15"><path d="M4.300 .500c-.7 1.500 .7 3 0 5M6.300 .300c-.7 1.500 .7 3.200 0 5.200M8.300 .500c-.7 1.500 .7 3 0 5" stroke="#3a3a3a" stroke-width=".9" fill="none"/><ellipse cx="7" cy="12" rx="6.600" ry="2.500" fill="#e7a58a" stroke="#b0593a" stroke-width=".8"/><path d="M11.300 6.300c3-1.200 4.600 2.400 .6 4.200" fill="none" stroke="#cc6c4c" stroke-width="1.600"/><path d="M1.800 5.600h9.800c.5 3.600-1 6-3.200 6.800h-3.400c-2.200-.8-3.700-3.200-3.200-6.800z" fill="#e08b6b" stroke="#b0593a" stroke-width=".8"/><ellipse cx="6.700" cy="5.800" rx="4.800" ry="1.200" fill="#7a3520"/><path d="M3.200 7.500c0 2 .6 3.300 1.800 4.300" stroke="#f6c3ae" stroke-width="1.100" fill="none"/></svg>
<svg style="left:59px;top:137px" width="16" height="15" viewBox="0 0 16 15"><path d="M4.500 3.500 L5.500 1.500 L13.500 1.500 L13.500 9.500" fill="#8f8ff0" stroke="#111" stroke-width="1.200"/><path d="M.8 4.200 L11.500 4.200 L13.500 11.200 L3.800 11.200z" fill="#b6b6f2" stroke="#111" stroke-width="1.200" stroke-linejoin="round"/><rect x="7.5" y="6.5" width="7.600" height="7.200" fill="#e8c766" stroke="#86691a" stroke-width="1"/><path d="M11.3 6.5v7.200M7.5 10.1h7.600" stroke="#86691a" stroke-width=".8"/><rect x="12" y="7.5" width="2" height="1.200" fill="#fff6d6"/></svg>
<svg style="left:74px;top:156px" width="16" height="15" viewBox="0 0 16 15"><rect x=".600" y=".600" width="14" height="13.200" fill="#ecd078" stroke="#86691a" stroke-width="1.200"/><path d="M7.600 .600v13.200M.600 8.300h14" stroke="#86691a" stroke-width="1"/><path d="M1.500 1.800h5.300M8.500 1.800h5.200" stroke="#f8ecc0" stroke-width="1.400"/><rect x="9.800" y="4.800" width="3" height="1.600" fill="#fffbe8"/></svg>
<svg style="left:88px;top:174px" width="14" height="16" viewBox="0 0 14 16"><path d="M.600 .600h8.400l3.600 3.600v10.200h-12z" fill="url(#gPage)" stroke="#66778b" stroke-width="1.100"/><path d="M9 .600v3.600h3.600z" fill="#f5f7fa" stroke="#8b99aa" stroke-width=".6"/><rect x="2.700" y="7.800" width="3.800" height="3.600" fill="#8fb6de" stroke="#4c6f96" stroke-width=".8"/><path d="M6 3.800l2.300 2.300-2.300 2.300-2.300-2.300z" fill="#f2b04a" stroke="#a86a12" stroke-width=".7"/><circle cx="8.700" cy="9.600" r="2.200" fill="#ee8a8a" stroke="#b84a4a" stroke-width=".7"/></svg>
<svg style="left:88px;top:193px" width="16" height="16" viewBox="0 0 16 16"><path d="M.600 .600h8.400l3.600 3.600v10.200h-12z" fill="url(#gPage)" stroke="#66778b" stroke-width="1.100"/><path d="M9 .600v3.600h3.600z" fill="#f5f7fa" stroke="#8b99aa" stroke-width=".6"/><rect x="2.700" y="7.800" width="3.800" height="3.600" fill="#8fb6de" stroke="#4c6f96" stroke-width=".8"/><path d="M6 3.800l2.300 2.300-2.300 2.300-2.300-2.300z" fill="#f2b04a" stroke="#a86a12" stroke-width=".7"/><circle cx="8.700" cy="9.600" r="2.200" fill="#ee8a8a" stroke="#b84a4a" stroke-width=".7"/><path d="M9.500 6.300 L14.800 10.500 L9.500 14.800z" fill="#8fda5c" stroke="#2c8a0f" stroke-width="1" stroke-linejoin="round"/></svg>
<svg style="left:59px;top:213px" width="16" height="15" viewBox="0 0 16 15"><path d="M7.500 1h6v2.500h-6z" fill="#8c8ce6" stroke="#5a5ac0" stroke-width=".6"/><path d="M2.600 2.600h5.400l1 1h4v8.500h-10.400z" fill="#fdfdff" stroke="#111" stroke-width="1.200" stroke-linejoin="miter"/><path d="M4.500 4.500h6.500v6h-6.500z" fill="#c9c9f4"/><rect x="7.7" y="6.7" width="7.600" height="7.200" fill="#e8c766" stroke="#86691a" stroke-width="1"/><path d="M11.5 6.7v7.200M7.7 10.3h7.600" stroke="#86691a" stroke-width=".8"/><rect x="12.2" y="7.7" width="2" height="1.200" fill="#fff6d6"/></svg>
<svg style="left:59px;top:232px" width="16" height="15" viewBox="0 0 16 15"><path d="M7.500 1h6v2.500h-6z" fill="#8c8ce6" stroke="#5a5ac0" stroke-width=".6"/><path d="M2.600 2.600h5.400l1 1h4v8.500h-10.400z" fill="#fdfdff" stroke="#111" stroke-width="1.200" stroke-linejoin="miter"/><path d="M4.500 4.500h6.500v6h-6.500z" fill="#c9c9f4"/><rect x="7.200" y="6.200" width="7.800" height="3.200" rx="1.200" fill="#b86a6a" stroke="#7a2e2e" stroke-width=".8"/><path d="M8.500 7.200h5" stroke="#e0a8a8" stroke-width=".8"/><rect x="8" y="9.400" width="7.300" height="2.800" rx="1" fill="#c8b060" stroke="#7a6420" stroke-width=".8"/><rect x="7.500" y="12.200" width="6.800" height="2.200" rx=".800" fill="#7a8ad0" stroke="#3a4a90" stroke-width=".8"/></svg>
<svg style="left:59px;top:251px" width="16" height="15" viewBox="0 0 16 15"><path d="M7.500 1h6v2.500h-6z" fill="#8c8ce6" stroke="#5a5ac0" stroke-width=".6"/><path d="M2.600 2.600h5.400l1 1h4v8.500h-10.400z" fill="#fdfdff" stroke="#111" stroke-width="1.200" stroke-linejoin="miter"/><path d="M4.500 4.500h6.500v6h-6.500z" fill="#c9c9f4"/><rect x="7.200" y="6.200" width="7.800" height="3.200" rx="1.200" fill="#b86a6a" stroke="#7a2e2e" stroke-width=".8"/><path d="M8.500 7.200h5" stroke="#e0a8a8" stroke-width=".8"/><rect x="8" y="9.400" width="7.300" height="2.800" rx="1" fill="#c8b060" stroke="#7a6420" stroke-width=".8"/><rect x="7.500" y="12.200" width="6.800" height="2.200" rx=".800" fill="#7a8ad0" stroke="#3a4a90" stroke-width=".8"/></svg>
<svg style="left:247px;top:79px" width="16" height="16" viewBox="0 0 16 16"><path d="M.600 .600h8.400l3.600 3.600v10.200h-12z" fill="url(#gPage)" stroke="#66778b" stroke-width="1.100"/><path d="M9 .600v3.600h3.600z" fill="#f5f7fa" stroke="#8b99aa" stroke-width=".6"/><rect x="2.700" y="7.800" width="3.800" height="3.600" fill="#8fb6de" stroke="#4c6f96" stroke-width=".8"/><path d="M6 3.800l2.300 2.300-2.300 2.300-2.300-2.300z" fill="#f2b04a" stroke="#a86a12" stroke-width=".7"/><circle cx="8.700" cy="9.600" r="2.200" fill="#ee8a8a" stroke="#b84a4a" stroke-width=".7"/><path d="M9.500 6.300 L14.800 10.500 L9.500 14.800z" fill="#8fda5c" stroke="#2c8a0f" stroke-width="1" stroke-linejoin="round"/></svg>
<svg style="left:351px;top:79px" width="14" height="16" viewBox="0 0 14 16"><path d="M.600 .600h8.400l3.600 3.600v10.200h-12z" fill="url(#gPage)" stroke="#66778b" stroke-width="1.100"/><path d="M9 .600v3.600h3.600z" fill="#f5f7fa" stroke="#8b99aa" stroke-width=".6"/><rect x="2.700" y="7.800" width="3.800" height="3.600" fill="#8fb6de" stroke="#4c6f96" stroke-width=".8"/><path d="M6 3.800l2.300 2.300-2.300 2.300-2.300-2.300z" fill="#f2b04a" stroke="#a86a12" stroke-width=".7"/><circle cx="8.700" cy="9.600" r="2.200" fill="#ee8a8a" stroke="#b84a4a" stroke-width=".7"/></svg>
<svg style="left:6px;top:74px" width="13" height="11" viewBox="0 0 13 11"><rect x="4.500" y=".800" width="7.500" height="6" fill="#f0ece4" stroke="#2e3436" stroke-width="1.300"/><path d="M4.500 1.200h7.500" stroke="#2e3436" stroke-width="2"/><rect x=".800" y="3.800" width="7.500" height="6" fill="#f0ece4" stroke="#2e3436" stroke-width="1.300"/><path d="M.800 4.200h7.500" stroke="#2e3436" stroke-width="2"/></svg>
<svg style="left:27.5px;top:669.5px" width="13" height="11" viewBox="0 0 13 11"><rect x="4.500" y=".800" width="7.500" height="6" fill="#f0ece4" stroke="#2e3436" stroke-width="1.300"/><path d="M4.500 1.200h7.500" stroke="#2e3436" stroke-width="2"/><rect x=".800" y="3.800" width="7.500" height="6" fill="#f0ece4" stroke="#2e3436" stroke-width="1.300"/><path d="M.800 4.200h7.500" stroke="#2e3436" stroke-width="2"/></svg>
<svg style="left:3.5px;top:171px" width="16" height="16" viewBox="0 0 16 16"><path d="M15.36 9.44 L14.22 12.19 L13.14 11.64 L11.64 13.14 L12.19 14.22 L9.44 15.36 L9.07 14.21 L6.93 14.21 L6.56 15.36 L3.81 14.22 L4.36 13.14 L2.86 11.64 L1.78 12.19 L0.64 9.44 L1.79 9.07 L1.79 6.93 L0.64 6.56 L1.78 3.81 L2.86 4.36 L4.36 2.86 L3.81 1.78 L6.56 0.64 L6.93 1.79 L9.07 1.79 L9.44 0.64 L12.19 1.78 L11.64 2.86 L13.14 4.36 L14.22 3.81 L15.36 6.56 L14.21 6.93 L14.21 9.07Z" fill="#bfe0b8" stroke="#1f6e1f" stroke-width="1.100" stroke-linejoin="round"/><circle cx="8" cy="8" r="4.600" fill="none" stroke="#e2f2de" stroke-width="1"/><circle cx="8" cy="8" r="3" fill="#f0ece4" stroke="#1f6e1f" stroke-width="1.100"/></svg>
<svg style="left:220px;top:80px" width="10" height="9" viewBox="0 0 10 9"><rect x=".700" y=".700" width="8.600" height="7.600" rx="1" fill="#fbfaf7" stroke="#4a4a48" stroke-width="1.200"/><rect x="2.300" y="4.800" width="5.400" height="2" fill="#3a3a38"/></svg>
<svg style="left:220px;top:563px" width="10" height="9" viewBox="0 0 10 9"><rect x=".700" y=".700" width="8.600" height="7.600" rx="1" fill="#fbfaf7" stroke="#4a4a48" stroke-width="1.200"/><rect x="2.300" y="4.800" width="5.400" height="2" fill="#3a3a38"/></svg>
<svg style="left:1020px;top:360px" width="10" height="9" viewBox="0 0 10 9"><rect x=".700" y=".700" width="8.600" height="7.600" rx="1" fill="#fbfaf7" stroke="#4a4a48" stroke-width="1.200"/><rect x="2.300" y="4.800" width="5.400" height="2" fill="#3a3a38"/></svg>
<svg style="left:74px;top:80.5px" width="8" height="8" viewBox="0 0 8 8"><path d="M.800 .800L7.2 7.2M7.2 .800L.800 7.2" stroke="#2e2e2c" stroke-width="1.900" stroke-linecap="butt"/></svg>
<svg style="left:102px;top:563.5px" width="8" height="8" viewBox="0 0 8 8"><path d="M.800 .800L7.2 7.2M7.2 .800L.800 7.2" stroke="#2e2e2c" stroke-width="1.900" stroke-linecap="butt"/></svg>
<svg style="left:334px;top:81px" width="8" height="8" viewBox="0 0 8 8"><path d="M.800 .800L7.2 7.2M7.2 .800L.800 7.2" stroke="#2e2e2c" stroke-width="1.900" stroke-linecap="butt"/></svg>
<svg style="left:476px;top:81px" width="8" height="8" viewBox="0 0 8 8"><path d="M.800 .800L7.2 7.2M7.2 .800L.800 7.2" stroke="#2e2e2c" stroke-width="1.900" stroke-linecap="butt"/></svg>
<svg style="left:316.5px;top:360px" width="8" height="8" viewBox="0 0 8 8"><path d="M.800 .800L7.2 7.2M7.2 .800L.800 7.2" stroke="#2e2e2c" stroke-width="1.900" stroke-linecap="butt"/></svg>
<svg style="left:776px;top:4px" width="24" height="19" viewBox="0 0 24 19"><path d="M10 10.500L14 14" stroke="#111" stroke-width="2.300" stroke-linecap="round"/><path d="M11.500 12L13.500 13.800" stroke="#ddd" stroke-width=".7"/><circle cx="7" cy="7.400" r="4.600" fill="#dbe8f3" stroke="#1a1a1a" stroke-width="1.400"/><path d="M4 6a3.500 3.500 0 0 1 5-1.500" stroke="#fff" stroke-width="1" fill="none"/><path d="M15 7.200h5l-2.500 3z" fill="#111"/></svg>
<div class="a" style="left:384px;top:110px;width:1px;height:16px;background:#e0d9ca;"></div>
<div class="a" style="left:385px;top:110px;width:1px;height:16px;background:#f8f6f1;"></div>
<div class="a" style="left:670px;top:110px;width:1px;height:16px;background:#e0d9ca;"></div>
<div class="a" style="left:671px;top:110px;width:1px;height:16px;background:#f8f6f1;"></div>
<div class="a" style="left:772px;top:110px;width:1px;height:16px;background:#e0d9ca;"></div>
<div class="a" style="left:773px;top:110px;width:1px;height:16px;background:#f8f6f1;"></div>
<div class="a" style="left:844px;top:110px;width:1px;height:16px;background:#e0d9ca;"></div>
<div class="a" style="left:845px;top:110px;width:1px;height:16px;background:#f8f6f1;"></div>
<div class="a" style="left:916px;top:110px;width:1px;height:16px;background:#e0d9ca;"></div>
<div class="a" style="left:917px;top:110px;width:1px;height:16px;background:#f8f6f1;"></div>
<div class="a" style="left:508px;top:110px;width:1px;height:16px;background:#e0d9ca;"></div>
<div class="a" style="left:509px;top:110px;width:1px;height:16px;background:#f8f6f1;"></div>
<svg style="left:397px;top:110px" width="18" height="16" viewBox="0 0 18 16"><rect x="1.500" y="1.500" width="13.500" height="13.500" fill="#dde7f3" stroke="#4f6f93" stroke-width="1"/><path d="M3.500 3.500h2.600M3.500 12.500h2.600M4.800 3.500v9" stroke="#445" stroke-width=".9" fill="none"/><path d="M7.3 7.8l4.800-4.300v2.600h4.800v3.600h-4.800v2.600z" fill="url(#gArr)" stroke="#a5620f" stroke-width="1" stroke-linejoin="round"/></svg>
<svg style="left:428px;top:110px" width="18" height="17" viewBox="0 0 18 17"><rect x="1.500" y="1.500" width="13.500" height="13.500" fill="#dde7f3" stroke="#4f6f93" stroke-width="1"/><path d="M4 4.500h7M4 6.500h4M4 8.500h3" stroke="#8aa2bd" stroke-width="1"/><path d="M6.3 11.7l4.800-4.300v2.600h4.800v3.600h-4.800v2.600z" fill="url(#gArr)" stroke="#a5620f" stroke-width="1" stroke-linejoin="round"/></svg>
<svg style="left:449px;top:116px" width="7" height="5" viewBox="0 0 7 5"><path d="M.600 .800h5.400l-2.700 3.400z" fill="#3d4856"/></svg>
<svg style="left:468px;top:110px" width="18" height="17" viewBox="0 0 18 17"><rect x="2.300" y="1.500" width="13.500" height="13.500" fill="#c5c8cd" stroke="#a9aeb5" stroke-width="1"/><path d="M9 4.500h5M11 6.500h3M12 8.500h2" stroke="#aeb3b9" stroke-width="1"/><path d="M10.800 11.700l-4.800-4.300v2.600h-4.800v3.600h4.800v2.600z" fill="#cbbba2" stroke="#b9a88c" stroke-width="1" stroke-linejoin="round"/></svg>
<svg style="left:490.5px;top:116px" width="7" height="5" viewBox="0 0 7 5"><path d="M.600 .800h5.400l-2.700 3.400z" fill="#3d4856"/></svg>
<svg style="left:521px;top:110px" width="18" height="17" viewBox="0 0 18 17"><rect x="1.5" y="1.5" width="12" height="6" fill="#f2ad50" stroke="#a5620f" stroke-width="1"/><path d="M2.5 2.8h10" stroke="#f9d39c" stroke-width="1"/><path d="M11.500 10.500L16 14.800" stroke="#1a1a1a" stroke-width="2.200" stroke-linecap="round"/><circle cx="8.900" cy="7.800" r="4.300" fill="#d3e6f5" stroke="#5a6470" stroke-width="1.200"/><path d="M5.500 7.500h6.800" stroke="#f5fafd" stroke-width="1.300"/></svg>
<svg style="left:551px;top:110px" width="18" height="17" viewBox="0 0 18 17"><rect x="1.5" y="1.5" width="12" height="6" fill="#f2ad50" stroke="#a5620f" stroke-width="1"/><path d="M2.5 2.8h10" stroke="#f9d39c" stroke-width="1"/><path d="M4.5 10.7l5.300-4.900v3h6.800v3.800h-6.800v3z" fill="#7dbaee" stroke="#1c5fa8" stroke-width="1" stroke-linejoin="round"/><path d="M6.5 10.2h9" stroke="#e6f2fc" stroke-width="1.500"/></svg>
<svg style="left:581px;top:110px" width="18" height="17" viewBox="0 0 18 17"><rect x="5.4" y="1.5" width="12" height="6" fill="#f2ad50" stroke="#a5620f" stroke-width="1"/><path d="M6.4 2.8h10" stroke="#f9d39c" stroke-width="1"/><path d="M13.500 10.700l-5.300-4.900v3h-6.800v3.800h6.800v3z" fill="#7dbaee" stroke="#1c5fa8" stroke-width="1" stroke-linejoin="round"/><path d="M2.500 10.200h9" stroke="#e6f2fc" stroke-width="1.500"/></svg>
<div class="a" style="left:605px;top:103px;width:30px;height:30px;background:linear-gradient(#c0b49e,#b4a892);border:1px solid #a99d86;border-radius:3px;box-shadow:inset 0 1px 2px rgba(90,75,50,.22);"></div>
<svg style="left:611px;top:110px" width="18" height="17" viewBox="0 0 18 17"><rect x="1.5" y="1.5" width="12" height="6" fill="#f2ad50" stroke="#a5620f" stroke-width="1"/><path d="M2.5 2.8h10" stroke="#f9d39c" stroke-width="1"/><path d="M2 8l3 7M13 2l3 7" stroke="#444" stroke-width=".8" stroke-dasharray="1 1"/><rect x="5.500" y="9.500" width="12" height="6" fill="#c9ccd0" stroke="#5a6068" stroke-width="1"/></svg>
<svg style="left:641px;top:110px" width="18" height="17" viewBox="0 0 18 17"><rect x="1.500" y="1.500" width="12.500" height="10.500" fill="none" stroke="#111" stroke-width="1.400" stroke-dasharray="1.400 1.400"/><path d="M11.300 7.300v9l2.200-2.200 3.300-.300z" fill="#6f8296" stroke="#222a33" stroke-width=".9" stroke-linejoin="round"/></svg>
<svg style="left:683px;top:110px" width="18" height="17" viewBox="0 0 18 17"><path d="M6.600 4.200l5.400 5.200h-3.300v5.800h-4.200v-5.800h-3.300z" fill="url(#gArr)" stroke="#a5620f" stroke-width="1" stroke-linejoin="round"/><path d="M7.5 1.2m2.600 0h4.800l2.700 3.100-2.700 3.100h-4.800l-2.700-3.100z" fill="#93dbec" stroke="#2a7f98" stroke-width="1" stroke-linejoin="round"/></svg>
<svg style="left:713px;top:110px" width="18" height="17" viewBox="0 0 18 17"><path d="M4.500 1.200h4.200v5.500h3.300l-5.400 5.600-5.400-5.600h3.300z" fill="url(#gArr)" stroke="#a5620f" stroke-width="1" stroke-linejoin="round"/><path d="M7.3 9.4m2.600 0h4.800l2.700 3.100-2.700 3.100h-4.800l-2.700-3.100z" fill="#93dbec" stroke="#2a7f98" stroke-width="1" stroke-linejoin="round"/></svg>
<svg style="left:743px;top:110px" width="18" height="17" viewBox="0 0 18 17"><path d="M1.200 1.200h6.500l3 3.100-3 3.100h-6.500z" fill="#aaa"/><path d="M7.500 9.400h6.500l3 3.100-3 3.100h-6.500z" fill="#aaa"/><path d="M2 8l4 7M9 2l4 7" stroke="#aaa" stroke-width=".8" stroke-dasharray="1 1"/></svg>
<svg style="left:785px;top:110px" width="18" height="17" viewBox="0 0 18 17"><path d="M1.500 6.500l5-4.300v2.500h4.700v3.600h-4.700v2.500z" fill="#b4daf5" stroke="#1c6fa8" stroke-width="1.100" stroke-linejoin="round"/><path d="M13.3 3.5h3.6999999999999993" stroke="#555" stroke-width="1"/><path d="M13.3 5.5h3.6999999999999993" stroke="#555" stroke-width="1"/><path d="M13.3 7.5h3.6999999999999993" stroke="#555" stroke-width="1"/><path d="M13.3 9.5h3.6999999999999993" stroke="#555" stroke-width="1"/><path d="M13.3 11.5h3.6999999999999993" stroke="#555" stroke-width="1"/><path d="M3 13.5h14" stroke="#333" stroke-width="1.300"/><path d="M3 15.5h14" stroke="#333" stroke-width="1.300"/></svg>
<svg style="left:815px;top:110px" width="18" height="17" viewBox="0 0 18 17"><path d="M11.500 6.500l-5-4.300v2.500h-4.700v3.600h4.700v2.500z" fill="#b4daf5" stroke="#1c6fa8" stroke-width="1.100" stroke-linejoin="round"/><path d="M13.5 3.5h3.6999999999999993" stroke="#555" stroke-width="1"/><path d="M13.5 5.5h3.6999999999999993" stroke="#555" stroke-width="1"/><path d="M13.5 7.5h3.6999999999999993" stroke="#555" stroke-width="1"/><path d="M13.5 9.5h3.6999999999999993" stroke="#555" stroke-width="1"/><path d="M13.5 11.5h3.6999999999999993" stroke="#555" stroke-width="1"/><path d="M3 13.5h14.2" stroke="#333" stroke-width="1.300"/><path d="M3 15.5h14.2" stroke="#333" stroke-width="1.300"/></svg>
<svg style="left:859px;top:112px" width="14" height="14" viewBox="0 0 14 14"><circle cx="6.900" cy="6.800" r="5.700" fill="#f58080" stroke="#c25656" stroke-width="1"/><path d="M3.500 4.500a4.500 4.500 0 0 1 6.800 0" stroke="#f9aaaa" stroke-width="1" fill="none"/></svg>
<svg style="left:889px;top:112px" width="14" height="14" viewBox="0 0 14 14"><rect x="1.500" y="1.500" width="11.300" height="11.300" fill="#c4c4c4" stroke="#8c8c8c" stroke-width="1"/><rect x="2.500" y="2.500" width="9.300" height="4" fill="#d6d6d6"/></svg>
<svg style="left:930px;top:110px" width="18" height="17" viewBox="0 0 18 17"><path d="M11 5.5h4.199999999999999" stroke="#666" stroke-width="1"/><path d="M11 7.5h4.199999999999999" stroke="#666" stroke-width="1"/><path d="M11 9.5h4.199999999999999" stroke="#666" stroke-width="1"/><path d="M1 11.5h14.2" stroke="#444" stroke-width="1"/><path d="M1 13.5h14.2" stroke="#444" stroke-width="1"/><path d="M1 15.5h14.2" stroke="#444" stroke-width="1"/><path d="M2.200 9.300l3-6.800M6 9.300l3-6.800" stroke="#1f8a1a" stroke-width="2.300" stroke-linecap="round"/><path d="M2.500 8.800l2.600-5.900M6.300 8.800l2.600-5.900" stroke="#7be060" stroke-width=".9" stroke-linecap="round"/></svg>
<svg style="left:960px;top:110px" width="18" height="17" viewBox="0 0 18 17"><path d="M11 5.5h4.199999999999999" stroke="#222" stroke-width="1"/><path d="M11 7.5h4.199999999999999" stroke="#222" stroke-width="1"/><path d="M11 9.5h4.199999999999999" stroke="#222" stroke-width="1"/><path d="M1 11.5h14.2" stroke="#111" stroke-width="1"/><path d="M1 13.5h14.2" stroke="#111" stroke-width="1"/><path d="M1 15.5h14.2" stroke="#111" stroke-width="1"/></svg>
<div class="a" style="left:943px;top:76px;width:20px;height:19px;background:linear-gradient(#f7f4ee,#e3dccd);border:1px solid #cfc5b2;border-radius:3px;"></div>
<svg style="left:943px;top:76px" width="20" height="19" viewBox="0 0 20 19"><path d="M12.500 5.500v8l-5.500-4z" fill="#2a2a28"/></svg>
<div class="a" style="left:964px;top:76px;width:20px;height:19px;background:linear-gradient(#f7f4ee,#e3dccd);border:1px solid #cfc5b2;border-radius:3px;"></div>
<svg style="left:964px;top:76px" width="20" height="19" viewBox="0 0 20 19"><path d="M7.500 5.500v8l5.500-4z" fill="#2a2a28"/></svg>
<div class="a" style="left:988px;top:76px;width:20px;height:19px;background:linear-gradient(#c9beaa,#b9ad98);border:1px solid #b1a58f;border-radius:3px;"></div>
<svg style="left:988px;top:76px" width="20" height="19" viewBox="0 0 20 19"><path d="M5.500 6.500h9l-4.500 6.500z" fill="#2a2a28"/></svg>
<div class="a" style="left:1012px;top:76px;width:20px;height:19px;background:linear-gradient(#c9beaa,#b9ad98);border:1px solid #b1a58f;border-radius:3px;"></div>
<svg style="left:1012px;top:76px" width="20" height="19" viewBox="0 0 20 19"><rect x="5.500" y="5.500" width="9" height="8" fill="#fff" stroke="#2a2a28" stroke-width="1.600"/></svg>
<div class="a" style="left:276px;top:153px;width:9px;height:9px;background:#fff;border:1px solid #6a6a6a;"></div>
<div class="a" style="left:278px;top:157px;width:5px;height:1px;background:#444;"></div>
<div class="a" style="left:280px;top:162px;width:1px;height:149px;background:#6a6a6a;"></div>
<div class="a" style="left:280px;top:310px;width:5px;height:1px;background:#6a6a6a;"></div>
<svg style="left:259px;top:170px" width="12" height="11" viewBox="0 0 12 11"><path d="M1.200 3.600h4.300v-2.600l5 4.600-5 4.600v-2.600h-4.300z" fill="#b0dc5a" stroke="#111" stroke-width="1" stroke-linejoin="round"/></svg>
<div class="a" style="left:259px;top:339px;width:14px;height:7px;overflow:hidden"><div class="a" style="left:2px;top:1px;width:11px;height:11px;border:1.700px solid #109a10;border-radius:50%;background:#fff"></div><div class="a" style="left:5px;top:4px;width:5px;height:5px;border:1.500px solid #109a10;border-radius:50%;background:#bfe8b0"></div></div>
<div class="a" style="left:1008px;top:135px;width:16px;height:211px;background:linear-gradient(90deg,#d9d0bf,#ebe6db 35%,#fbfaf7 80%,#f3efe8);border-left:1px solid #b9ad97;border-radius:7px 7px 7px 7px / 8px 8px 8px 8px;"></div>
<svg style="left:1008px;top:135px" width="16" height="12" viewBox="0 0 16 12"><path d="M5.5 11.500h6l-3-5.500z" fill="#5a5a58"/></svg>
<svg style="left:1008px;top:333px" width="16" height="12" viewBox="0 0 16 12"><path d="M5.5 2.500h6l-3 5.500z" fill="#5a5a58"/></svg>
<div class="a" style="left:1008px;top:239px;width:16px;height:51px;background:linear-gradient(90deg,#ece7dc,#fbfaf7 60%,#f4f1ea);border:1px solid #b9ad97;border-radius:7px;"></div>
<div class="a" style="left:1013px;top:260.0px;width:6px;height:1px;background:#c9bfac;"></div>
<div class="a" style="left:1013px;top:263.0px;width:6px;height:1px;background:#c9bfac;"></div>
<div class="a" style="left:1013px;top:266.0px;width:6px;height:1px;background:#c9bfac;"></div>
<div class="a" style="left:1026px;top:142px;width:9px;height:9px;background:#5fb46c;border:1px solid #fff;"></div>
<div class="a" style="left:1026px;top:259px;width:9px;height:1px;background:#333;"></div>
<div class="a" style="left:1030px;top:258px;width:2px;height:3px;background:#555;border-radius:1px;"></div>
<svg style="left:776px;top:303px" width="16" height="24" viewBox="0 0 16 24"><path d="M2.500 2.500v16.500l3.800-3.600 2.700 6.300 2.600-1.100-2.700-6.100h5.100z" fill="#fff" stroke="#000" stroke-width="1.200" stroke-linejoin="round"/></svg>
<div class="a" style="left:247px;top:381px;width:22px;height:22px;background:linear-gradient(#c2b6a0,#b0a38c);border:1px solid #b0a48e;border-radius:4.500px;box-shadow:inset 0 1px 1px rgba(100,85,60,.18);"></div>
<div class="a" style="left:247px;top:408px;width:22px;height:22px;background:linear-gradient(#c2b6a0,#b0a38c);border:1px solid #b0a48e;border-radius:4.500px;box-shadow:inset 0 1px 1px rgba(100,85,60,.18);"></div>
<div class="a" style="left:247px;top:435px;width:22px;height:22px;background:linear-gradient(#c2b6a0,#b0a38c);border:1px solid #b0a48e;border-radius:4.500px;box-shadow:inset 0 1px 1px rgba(100,85,60,.18);"></div>
<span class="t" style="left:253px;top:381.800px;font-size:17.500px;font-weight:bold;color:#f4f7fa;text-shadow:0 0 1px #5a6a80,0 1px 0 #7a8aa0,1px 0 0 #8a9ab0;line-height:20px">$</span>
<svg style="left:250px;top:411px" width="17" height="16" viewBox="0 0 17 16"><g transform="translate(1.500,0)"><path d="M4 1.500h8l3.300 4-7.300 8-7.300-8z" fill="#d9b8f4" stroke="#a070d0" stroke-width=".9" stroke-linejoin="round"/><path d="M.700 5.500h14.600M4 1.500l2 4 2-4 2 4 2-4M6 5.500l2 8 2-8" stroke="#f6ecff" stroke-width=".7" fill="none"/></g><rect x=".500" y="6.500" width="7" height="7" fill="#f6f6f6" stroke="#555" stroke-width=".9"/><path d="M2.300 11.800l3.200-3.200M3 8.300h2.700v2.700" stroke="#111" stroke-width="1.200" fill="none"/></svg>
<svg style="left:250px;top:438px" width="17" height="16" viewBox="0 0 17 16"><g transform="translate(1.500,0)"><path d="M4 1.500h8l3.300 4-7.300 8-7.300-8z" fill="#cfe6f4" stroke="#6a9ab8" stroke-width=".9" stroke-linejoin="round"/><path d="M.700 5.500h14.600M4 1.500l2 4 2-4 2 4 2-4M6 5.500l2 8 2-8" stroke="#f4fbff" stroke-width=".7" fill="none"/></g><rect x=".500" y="6.500" width="7" height="7" fill="#f6f6f6" stroke="#555" stroke-width=".9"/><path d="M2.300 11.800l3.200-3.200M3 8.300h2.700v2.700" stroke="#111" stroke-width="1.200" fill="none"/></svg>
<svg style="left:250px;top:465px" width="17" height="16" viewBox="0 0 17 16"><rect x=".700" y=".700" width="13" height="10.500" fill="#dbe7f3" stroke="#6d87a6" stroke-width="1"/><path d="M2.500 3.500h3M7 3.500h5M2.500 6h3M7 6h3M2.500 8.500h3" stroke="#7f99b8" stroke-width="1"/><path d="M6.500 13.500l4.500-4.200a3 3 0 0 1 4-3.500l-2 2 .6 1.400 1.500 .5 1.800-1.900a3 3 0 0 1-3.800 3.800l-4.300 4.100z" fill="#eef2f6" stroke="#55606e" stroke-width=".8" stroke-linejoin="round"/></svg>
<svg style="left:250px;top:492px" width="17" height="16" viewBox="0 0 17 16"><g transform="translate(.500,1.500)"><path d="M4 1.500h8l3.300 4-7.300 8-7.300-8z" fill="#cfe6f4" stroke="#4a7a9c" stroke-width=".9" stroke-linejoin="round"/><path d="M.700 5.500h14.600M4 1.500l2 4 2-4 2 4 2-4M6 5.500l2 8 2-8" stroke="#f4fbff" stroke-width=".7" fill="none"/></g><path d="M.700 3.200h2.500v-2.500h2.600v2.500h2.500v2.600h-2.500v2.500h-2.600v-2.500h-2.500z" fill="#4fd02a" stroke="#1d8a0d" stroke-width=".9"/></svg>
<div class="a" style="left:277px;top:421.5px;width:13.5px;height:14px;background:linear-gradient(#fbfaf7,#e9e3d7);border:1px solid #e4ddcf;border-radius:3.500px;"></div>
<div class="a" style="left:280.3px;top:427.7px;width:7px;height:1.5px;background:#3a3a38;"></div>
<svg style="left:293.5px;top:420.5px" width="16" height="16" viewBox="0 0 16 16"><path d="M8 .700l7.300 7.300-7.300 7.300-7.300-7.300z" fill="#d6efc6" stroke="#4a9a1e" stroke-width="1.200" stroke-linejoin="round"/><path d="M8 4.200l3.800 3.800-3.800 3.800-3.800-3.800z" fill="#4a9a1e"/><path d="M8 2.400l5.600 5.600-5.600 5.600-5.600-5.600z" fill="none" stroke="#8fcf6c" stroke-width=".8"/></svg>
<svg style="left:309px;top:443.5px" width="16" height="16" viewBox="0 0 16 16"><path d="M8 .700l7.300 7.300-7.300 7.300-7.300-7.300z" fill="#d6efc6" stroke="#4a9a1e" stroke-width="1.200" stroke-linejoin="round"/><path d="M8 4.200l3.800 3.800-3.800 3.800-3.800-3.800z" fill="#4a9a1e"/><path d="M8 2.400l5.600 5.600-5.600 5.600-5.600-5.600z" fill="none" stroke="#8fcf6c" stroke-width=".8"/></svg>
<svg style="left:309px;top:466.5px" width="16" height="16" viewBox="0 0 16 16"><path d="M8 .700l7.300 7.300-7.300 7.300-7.300-7.300z" fill="#d6efc6" stroke="#4a9a1e" stroke-width="1.200" stroke-linejoin="round"/><path d="M8 4.200l3.800 3.800-3.800 3.800-3.800-3.800z" fill="#4a9a1e"/><path d="M8 2.400l5.600 5.600-5.600 5.600-5.600-5.600z" fill="none" stroke="#8fcf6c" stroke-width=".8"/></svg>
<svg style="left:309px;top:489.5px" width="16" height="16" viewBox="0 0 16 16"><path d="M8 .700l7.300 7.300-7.300 7.300-7.300-7.300z" fill="#d6efc6" stroke="#4a9a1e" stroke-width="1.200" stroke-linejoin="round"/><path d="M8 4.200l3.800 3.800-3.800 3.800-3.800-3.800z" fill="#4a9a1e"/><path d="M8 2.400l5.600 5.600-5.600 5.600-5.600-5.600z" fill="none" stroke="#8fcf6c" stroke-width=".8"/></svg>
<svg width="0" height="0" style="left:0;top:0"><defs><linearGradient id="gLoc" x1="0" y1="0" x2="0" y2="1"><stop offset="0" stop-color="#d9f2c6"/><stop offset=".5" stop-color="#b6e392"/><stop offset=".55" stop-color="#8fd460"/><stop offset="1" stop-color="#7cc94c"/></linearGradient></defs></svg>
<svg style="left:293px;top:513px" width="17" height="16" viewBox="0 0 17 16"><path d="M8.200 .800l7.300 7-7.300 7-7.300-7z" fill="url(#gLoc)" stroke="#4a9a1e" stroke-width="1.100" stroke-linejoin="round"/></svg>
<svg style="left:1021px;top:377px" width="17" height="16" viewBox="0 0 17 16"><rect x="1.500" y=".500" width="14.500" height="14.500" fill="#d2d2f5" stroke="#7878d2" stroke-width="1"/><path d="M1.500 5.500h14.500M1.500 10.500h14.500M6.500 .500v14.500M11.500 .500v14.500" stroke="#f0f0ff" stroke-width="1"/><path d="M5.500 5.500L15.500 15" stroke="#111" stroke-width="2.200" stroke-linecap="round"/><path d="M6.500 6.500L10 9.800" stroke="#eee" stroke-width="1"/><path d="M5.500 .500l1.200 3.300 3.300-1.300-1.800 3 3 1.500-3.300.8.500 3.500-2.500-2.500-2.500 2.500.500-3.500-3.300-.8 3-1.500-1.800-3 3.300 1.300z" fill="#f7c520" stroke="#c98a08" stroke-width=".6"/><circle cx="5.500" cy="5.800" r="1.500" fill="#fff6c0"/></svg>
<div class="a" style="left:1021px;top:394px;width:16px;height:267px;background:linear-gradient(90deg,#d9d0bf,#ebe6db 35%,#fbfaf7 80%,#f3efe8);border-left:1px solid #b9ad97;border-radius:7px 7px 7px 7px / 8px 8px 8px 8px;"></div>
<svg style="left:1021px;top:394px" width="16" height="12" viewBox="0 0 16 12"><path d="M5.5 11.500h6l-3-5.500z" fill="#5a5a58"/></svg>
<svg style="left:1021px;top:648px" width="16" height="12" viewBox="0 0 16 12"><path d="M5.5 2.500h6l-3 5.500z" fill="#5a5a58"/></svg>
<svg style="left:210.5px;top:582.5px" width="25" height="23" viewBox="0 0 25 23"><path d="M9.300 8h9l-4.500 7.500z" fill="#6d665b"/></svg>
<div class="a" style="left:26px;top:606px;width:211px;height:8px;background:#fff;"></div>
<div class="a" style="left:27px;top:609px;width:13px;height:5px;background:#f7f4ee;border:1px solid #e4ddcf;border-bottom:none;border-radius:3px 3px 0 0;"></div>
<svg style="left:46px;top:608px" width="14" height="6" viewBox="0 0 14 6"><path d="M1 6.500l6-5.500 6 5.500" fill="#fbe3b0" stroke="#d9962a" stroke-width="1.200"/></svg>
<div class="a" style="left:60px;top:609px;width:120px;height:5px;overflow:hidden"><span class="t" style="left:4px;top:-3px;font-size:13.500px;color:#77736b;letter-spacing:.900px">LyyraKortti ::</span></div>
<div class="a" style="left:221px;top:608px;width:11px;height:4px;background:#e6e0d3;border:1px solid #b9ad97;border-radius:2px;"></div>
<div class="a" style="left:229px;top:607px;width:2px;height:6px;background:#555;border-radius:1px;"></div>
<div class="a" style="left:27.5px;top:613.5px;width:192.5px;height:15.5px;background:linear-gradient(#dcd4c3,#eee9df 40%,#fbfaf7 85%);border-top:1px solid #c9bfab;border-radius:8px;"></div>
<div class="a" style="left:46.5px;top:613.5px;width:113px;height:15.5px;background:linear-gradient(#f4f1ea,#fdfcfa 50%,#efebe2);border:1px solid #b9ad97;border-radius:8px;"></div>
<div class="a" style="left:99px;top:618.5px;width:1px;height:6px;background:#c4b9a5;"></div>
<div class="a" style="left:102px;top:618.5px;width:1px;height:6px;background:#c4b9a5;"></div>
<div class="a" style="left:105px;top:618.5px;width:1px;height:6px;background:#c4b9a5;"></div>
<svg style="left:33px;top:617px" width="7" height="9" viewBox="0 0 7 9"><path d="M6 1.500v6l-5-3z" fill="#6a655c"/></svg>
<svg style="left:209px;top:617px" width="7" height="9" viewBox="0 0 7 9"><path d="M1 1.500v6l5-3z" fill="#6a655c"/></svg>
<div class="a" style="left:26px;top:629px;width:211px;height:1px;background:#cfc5b1;"></div>
<svg style="left:127px;top:631px" width="9" height="5" viewBox="0 0 9 5"><path d="M.500 .500h7.500l-3.750 3.500z" fill="#cdbf9f"/></svg>
<div class="a" style="left:57px;top:638px;width:20px;height:18px;background:linear-gradient(#c3b7a1,#b1a58e);border:1px solid #b6aa94;border-radius:4.500px;box-shadow:inset 0 1px 1px rgba(100,85,60,.15),0 0 0 .5px #cfc5b2;"></div>
<div class="a" style="left:82px;top:638px;width:20px;height:18px;background:linear-gradient(#c3b7a1,#b1a58e);border:1px solid #b6aa94;border-radius:4.500px;box-shadow:inset 0 1px 1px rgba(100,85,60,.15),0 0 0 .5px #cfc5b2;"></div>
<div class="a" style="left:107px;top:638px;width:20px;height:18px;background:linear-gradient(#c3b7a1,#b1a58e);border:1px solid #b6aa94;border-radius:4.500px;box-shadow:inset 0 1px 1px rgba(100,85,60,.15),0 0 0 .5px #cfc5b2;"></div>
<div class="a" style="left:132px;top:638px;width:20px;height:18px;background:linear-gradient(#c3b7a1,#b1a58e);border:1px solid #b6aa94;border-radius:4.500px;box-shadow:inset 0 1px 1px rgba(100,85,60,.15),0 0 0 .5px #cfc5b2;"></div>
<svg style="left:33.5px;top:638px" width="18" height="18" viewBox="0 0 18 18"><g transform="translate(0.8,0.5) scale(1.05)"><circle cx="4" cy="2.600" r="2.300" fill="#f2b65c" stroke="#b8741c" stroke-width=".7"/><path d="M0 6.500c0-1.200 1-2 2-2h4c1 0 2 .8 2 2v3.500h-1.500v-2.500h-5v2.500h-1.500z" fill="#f29090" stroke="#c05050" stroke-width=".7"/><path d="M1.800 7.500h4.400v3h-4.400z" fill="#f29090"/><path d="M1.800 10.500h4.400v5h-1.700v-3.500h-1v3.500h-1.700z" fill="#6aa8e6" stroke="#2f66a8" stroke-width=".7"/></g><g transform="translate(8,4) scale(0.85)"><circle cx="4" cy="2.600" r="2.300" fill="#f2b65c" stroke="#b8741c" stroke-width=".7"/><path d="M0 6.500c0-1.200 1-2 2-2h4c1 0 2 .8 2 2v3.500h-1.500v-2.500h-5v2.500h-1.500z" fill="#f29090" stroke="#c05050" stroke-width=".7"/><path d="M1.800 7.500h4.400v3h-4.400z" fill="#f29090"/><path d="M1.800 10.500h4.400v5h-1.700v-3.500h-1v3.500h-1.700z" fill="#6aa8e6" stroke="#2f66a8" stroke-width=".7"/></g></svg>
<svg style="left:61px;top:640px" width="13" height="13" viewBox="0 0 13 13"><rect x="1" y="1" width="10.800" height="10.800" fill="#a9cdf1" stroke="#34548c" stroke-width="1"/><path d="M2 2.300h8.800" stroke="#dcebfa" stroke-width="1"/></svg>
<svg style="left:84px;top:639.5px" width="17" height="15" viewBox="0 0 17 15"><rect x="4.500" y=".800" width="9" height="8.500" fill="#a9cdf1" stroke="#5a7ab0" stroke-width="1"/><circle cx="11.800" cy="10" r="3.700" fill="#f58888" stroke="#c04a4a" stroke-width=".9"/><text x=".300" y="13.500" font-family="Liberation Sans" font-size="10" font-weight="bold" fill="#f2f2f2" stroke="#444" stroke-width=".9" paint-order="stroke">S</text></svg>
<svg style="left:109.5px;top:639px" width="15" height="16" viewBox="0 0 15 16"><path d="M4.200 8v-3a3.300 3.300 0 0 1 6.600 0v3" fill="none" stroke="#8c8c8c" stroke-width="2.300"/><path d="M4.200 8v-3a3.300 3.300 0 0 1 6.600 0v3" fill="none" stroke="#c8c8c8" stroke-width=".8"/><rect x="1.300" y="7" width="12.400" height="8" rx="1" fill="#e6aa48" stroke="#96600f" stroke-width="1"/><path d="M2 9.300h11M2 11.300h11M2 13.300h11" stroke="#c4862a" stroke-width=".9"/></svg>
<svg style="left:134.5px;top:640px" width="15" height="14" viewBox="0 0 15 14"><path d="M3.500 .800v8.500M.800 6.800l2.700 3.500 2.700-3.500" fill="none" stroke="#3f6c9c" stroke-width="1.700"/><path d="M3.500 1.500v7.500" stroke="#cfe0f2" stroke-width=".6"/><rect x="7.800" y=".300" width="6" height="6" fill="#555" /><text x="8.500" y="5.600" font-family="Liberation Sans" font-size="6.500" font-weight="bold" fill="#fff">A</text><rect x="7.800" y="7.300" width="6" height="6" fill="#b57a1e"/><text x="8.700" y="12.600" font-family="Liberation Sans" font-size="6.500" font-weight="bold" fill="#fff">Z</text></svg>
<svg style="left:158px;top:640px" width="18" height="14" viewBox="0 0 18 14"><path d="M3.500 .800v8.500M.800 6.800l2.700 3.500 2.700-3.500" fill="none" stroke="#3f6c9c" stroke-width="1.700"/><path d="M3.500 1.500v7.500" stroke="#cfe0f2" stroke-width=".6"/><path d="M8.500 1.200h7.500M8.500 3.200h6M8.500 5.200h7.500M8.500 7.200h5M8.500 9.200h7.500M8.500 11.200h6" stroke="#4a4a4a" stroke-width="1.200"/></svg>
<svg style="left:52px;top:667px" width="17" height="16" viewBox="0 0 17 16"><rect x=".700" y=".700" width="13.600" height="11.600" fill="#f4f7fb" stroke="#5a7aa0" stroke-width="1"/><path d="M.700 2.500h13.600" stroke="#5a7aa0" stroke-width="2"/><ellipse cx="11" cy="12" rx="4.800" ry="3" fill="#f2c060" stroke="#a86a12" stroke-width=".9"/><path d="M8 9.500c1-2 4-2 4.500 0" fill="#f2c060" stroke="#a86a12" stroke-width=".8"/></svg>
<svg style="left:126px;top:669px" width="11" height="11" viewBox="0 0 11 11"><rect x="1" y="1" width="8.500" height="8.500" fill="#f28a8a" stroke="#b84040" stroke-width="1.100"/><rect x="2.200" y="2.200" width="6" height="2.500" fill="#f8b8b8"/></svg>
<svg style="left:232px;top:667px" width="17" height="16" viewBox="0 0 17 16"><rect x=".700" y=".700" width="12" height="11" fill="#dfe8f2" stroke="#5a7aa0" stroke-width="1"/><path d="M.700 2.300h12" stroke="#5a7aa0" stroke-width="1.600"/><path d="M2.500 5h3M2.500 7h2" stroke="#7a8aa0"/><circle cx="10" cy="10" r="5" fill="#f6f6f6" stroke="#555" stroke-width="1.200"/><path d="M10 10v-3M10 10l2.300 1" stroke="#d0521a" stroke-width="1.200"/></svg>
</body></html>
